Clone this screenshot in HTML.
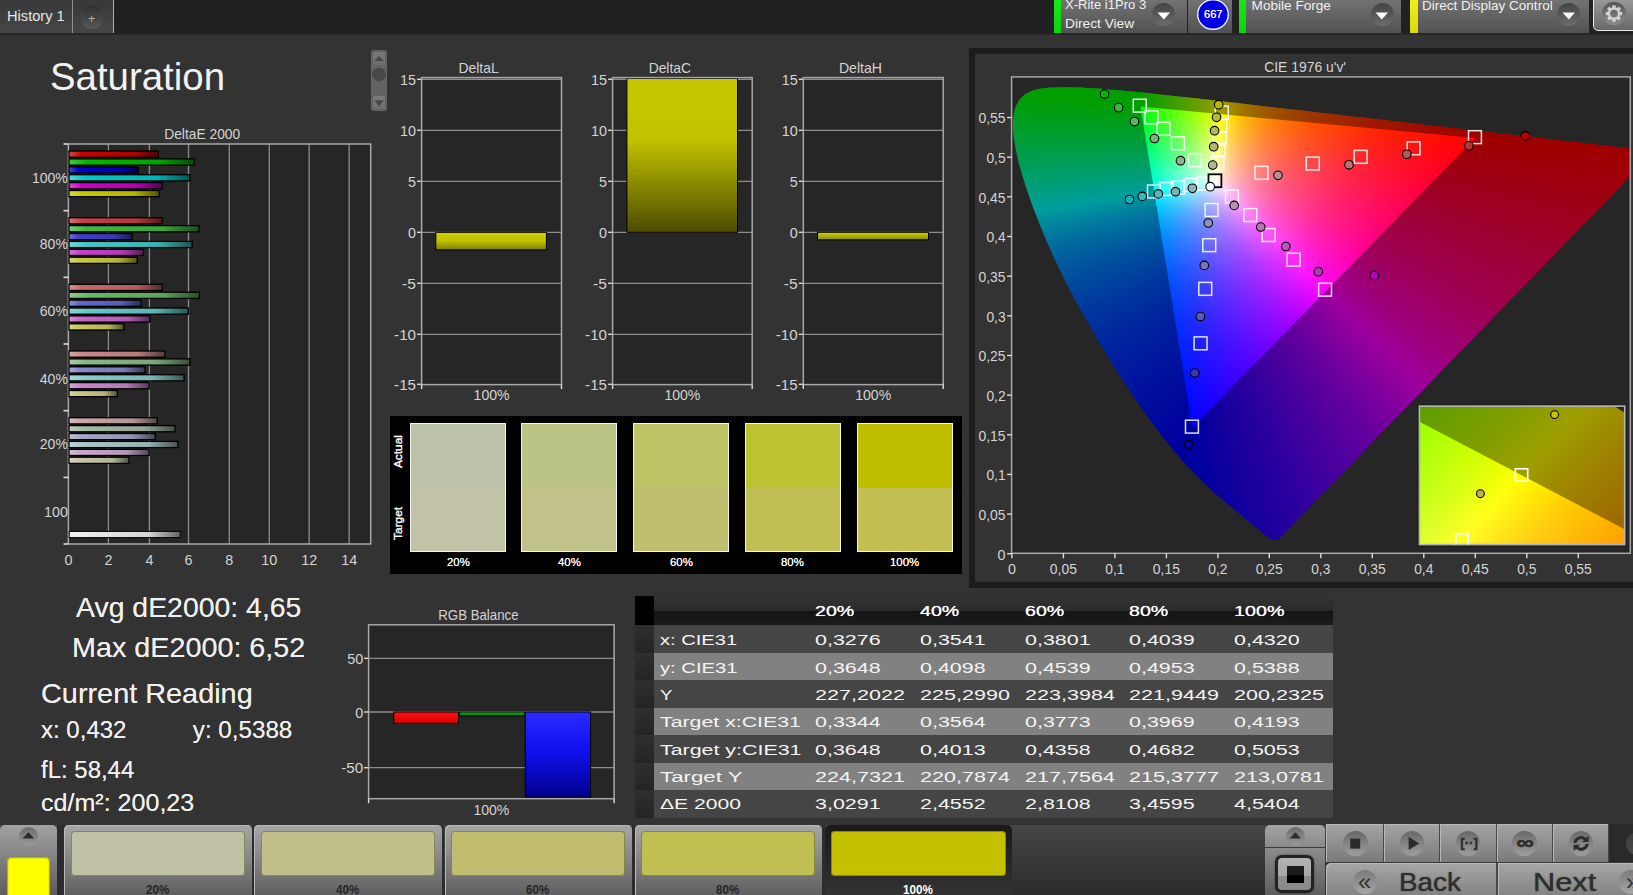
<!DOCTYPE html>
<html lang="en"><head><meta charset="utf-8"><title>Saturation</title>
<style>
html,body{margin:0;padding:0}
body{width:1633px;height:895px;overflow:hidden;background:#333;font-family:"Liberation Sans",sans-serif;position:relative}
.t{position:absolute;white-space:nowrap;line-height:1;transform-origin:0 0}
.a{position:absolute}
svg text{font-family:"Liberation Sans",sans-serif}
</style></head>
<body>
<div class="a" style="left:0.0px;top:0.0px;width:1633.0px;height:33.0px;background:#212121"></div>
<div class="a" style="left:0.0px;top:33.0px;width:1633.0px;height:2.2px;background:#262626"></div>
<div class="a" style="left:0.0px;top:0.0px;width:72.0px;height:32.8px;background:linear-gradient(#383838,#464646)"></div>
<div class="t" style="left:7.0px;top:9.2px;font-size:14.2px;color:#e6e6e6;transform:scaleX(1.0318);">History 1</div>
<div class="a" style="left:72.0px;top:0.0px;width:1.0px;height:32.8px;background:#909090"></div>
<div class="a" style="left:73.0px;top:0.0px;width:40.0px;height:32.8px;background:linear-gradient(#383838,#464646)"></div>
<div class="a" style="left:113.0px;top:0.0px;width:1.2px;height:32.8px;background:#b0b0b0"></div>
<div class="a" style="left:79.6px;top:5.1px;width:24.0px;height:24.0px;border-radius:50%;background:linear-gradient(#303030,#404040 45%,#585858)"></div>
<div class="t" style="left:87.9px;top:12.6px;font-size:12.5px;color:#b0b0b0;">+</div>
<div class="a" style="left:1053.7px;top:0.0px;width:133.3px;height:33.0px;background:linear-gradient(#727272,#525252)"></div><div class="a" style="left:1053.7px;top:0.0px;width:7.6px;height:33.0px;background:linear-gradient(#18e818,#0fd20f)"></div><div class="t" style="left:1065.1px;top:-2.0px;font-size:13.6px;color:#f0f0f0;transform:scaleX(0.9592);">X-Rite i1Pro 3</div><div class="t" style="left:1065.1px;top:17.3px;font-size:13.6px;color:#f0f0f0;transform:scaleX(1.0099);">Direct View</div><div class="a" style="left:1152.0px;top:3.0px;width:23.0px;height:23.0px;border-radius:50%;background:linear-gradient(#444,#6c6c6c)"></div><svg class="a" style="left:1156.7px;top:12px" width="14" height="9"><path d="M0.5,0.5H13L6.8,7.6Z" fill="#fff"/></svg>
<div class="a" style="left:1188.2px;top:0.0px;width:43.7px;height:33.0px;background:linear-gradient(#727272,#525252)"></div>
<div class="a" style="left:1197.2px;top:-1.2px;width:31.6px;height:31.6px;border-radius:50%;background:#0000e4;box-shadow:inset 0 0 0 1.4px #f4f4ff"></div>
<div class="t" style="left:1203.8px;top:9.1px;font-size:11.5px;color:#fff;transform:scaleX(0.9591);text-shadow:0 0 .5px #fff;">667</div>
<div class="a" style="left:1238.9px;top:0.0px;width:162.6px;height:33.0px;background:linear-gradient(#727272,#525252)"></div><div class="a" style="left:1238.9px;top:0.0px;width:7.6px;height:33.0px;background:linear-gradient(#18e818,#0fd20f)"></div><div class="t" style="left:1251.6px;top:-1.2px;font-size:13.6px;color:#f0f0f0;">Mobile Forge</div><div class="a" style="left:1370.5px;top:3.0px;width:23.0px;height:23.0px;border-radius:50%;background:linear-gradient(#444,#6c6c6c)"></div><svg class="a" style="left:1375.2px;top:12px" width="14" height="9"><path d="M0.5,0.5H13L6.8,7.6Z" fill="#fff"/></svg>
<div class="a" style="left:1410.4px;top:0.0px;width:178.2px;height:33.0px;background:linear-gradient(#727272,#525252)"></div><div class="a" style="left:1410.4px;top:0.0px;width:7.6px;height:33.0px;background:linear-gradient(#f0f018,#d8d810)"></div><div class="t" style="left:1421.8px;top:-1.2px;font-size:13.6px;color:#f0f0f0;transform:scaleX(0.9939);">Direct Display Control</div><div class="a" style="left:1557.2px;top:3.0px;width:23.0px;height:23.0px;border-radius:50%;background:linear-gradient(#444,#6c6c6c)"></div><svg class="a" style="left:1561.9px;top:12px" width="14" height="9"><path d="M0.5,0.5H13L6.8,7.6Z" fill="#fff"/></svg>
<div class="a" style="left:1592.6px;top:-3.0px;width:50.0px;height:34.0px;border:1.5px solid #e8e8e8;border-radius:0 0 0 5px;background:linear-gradient(#9a9a9a,#686868);box-sizing:border-box"></div>
<div class="a" style="left:1602.2px;top:1.8px;width:23.6px;height:23.6px;border-radius:50%;background:linear-gradient(#555,#8c8c8c)"></div>
<div class="t" style="left:50.2px;top:57.2px;font-size:39.0px;color:#f2f2f2;transform:scaleX(0.9844);">Saturation</div>
<div class="a" style="left:371.2px;top:50.2px;width:15.8px;height:60.6px;background:#636363;border-radius:3px"></div>
<div class="a" style="left:372.9px;top:52.0px;width:12.4px;height:12.6px;background:linear-gradient(#7a7a7a,#6e6e6e);border-radius:2.5px"></div>
<div class="a" style="left:372.9px;top:96.2px;width:12.4px;height:12.6px;background:linear-gradient(#7a7a7a,#6e6e6e);border-radius:2.5px"></div>
<div class="a" style="left:372.4px;top:67.7px;width:13.4px;height:13.4px;background:#484848;border-radius:50%"></div>
<div class="a" style="left:389.9px;top:416.0px;width:572.1px;height:158.0px;background:#000"></div>
<div class="a" style="left:410.1px;top:422.6px;width:96.0px;height:129.0px;box-sizing:border-box;border:1px solid #f4f4f4;background:linear-gradient(#bdc3a9 0,#bdc3a9 50.4%,#c1c2a6 50.4%,#c1c2a6 100%)"></div>
<div class="t" style="left:446.5px;top:556.2px;font-size:11.6px;color:#fff;transform:scaleX(0.9800);text-shadow:0 0 .5px #fff;">20%</div>
<div class="a" style="left:521.1px;top:422.6px;width:96.0px;height:129.0px;box-sizing:border-box;border:1px solid #f4f4f4;background:linear-gradient(#bbc484 0,#bbc484 50.4%,#c1c18a 50.4%,#c1c18a 100%)"></div>
<div class="t" style="left:557.5px;top:556.2px;font-size:11.6px;color:#fff;transform:scaleX(0.9800);text-shadow:0 0 .5px #fff;">40%</div>
<div class="a" style="left:633.2px;top:422.6px;width:96.0px;height:129.0px;box-sizing:border-box;border:1px solid #f4f4f4;background:linear-gradient(#bec465 0,#bec465 50.4%,#c0be6f 50.4%,#c0be6f 100%)"></div>
<div class="t" style="left:669.6px;top:556.2px;font-size:11.6px;color:#fff;transform:scaleX(0.9800);text-shadow:0 0 .5px #fff;">60%</div>
<div class="a" style="left:744.9px;top:422.6px;width:96.0px;height:129.0px;box-sizing:border-box;border:1px solid #f4f4f4;background:linear-gradient(#bdc232 0,#bdc232 50.4%,#c0bd52 50.4%,#c0bd52 100%)"></div>
<div class="t" style="left:781.3px;top:556.2px;font-size:11.6px;color:#fff;transform:scaleX(0.9800);text-shadow:0 0 .5px #fff;">80%</div>
<div class="a" style="left:856.9px;top:422.6px;width:96.0px;height:129.0px;box-sizing:border-box;border:1px solid #f4f4f4;background:linear-gradient(#bfbf00 0,#bfbf00 50.4%,#c3bf52 50.4%,#c3bf52 100%)"></div>
<div class="t" style="left:890.1px;top:556.2px;font-size:11.6px;color:#fff;transform:scaleX(0.9849);text-shadow:0 0 .5px #fff;">100%</div>
<div class="a" style="left:969.4px;top:47.8px;width:680.0px;height:540.5px;box-sizing:border-box;border:6.3px solid #1c1c1c;background:#333"></div>
<div class="a" style="left:1011.6px;top:76.9px;width:618.7px;height:476.4px;background:#262626;overflow:hidden"><div class="a" style="left:0;top:0;width:618.7px;height:476.4px;background:conic-gradient(from 0deg at 180.35px 350.49px,#97ffff 0.00deg,#edffff 4.50deg,#f8ffff 5.00deg,#fffcff 5.50deg,#ffe8ff 6.50deg,#ffc7ff 8.50deg,#ffb9ff 9.50deg,#ffa1ff 11.50deg,#ff88ff 14.00deg,#ff70ff 17.00deg,#ff56ff 21.00deg,#ff29ff 31.00deg,#ff22ff 33.00deg,#ff00ff 44.50deg,#ff00ff 170.81deg,#0000ff 170.82deg,#0000ff 224.34deg,#00ffff 224.35deg,#00ffff 350.83deg,#3cffff 354.50deg,#43ffff 355.00deg,#6cffff 357.50deg,#97ffff 360.00deg),conic-gradient(from 0deg at 128.50px 29.64px,#ffff00 0.00deg,#ffff00 95.37deg,#ffff04 96.00deg,#ffff87 120.50deg,#ffffc6 129.00deg,#fffff5 134.00deg,#fffffb 134.50deg,#feffff 135.00deg,#f4ffff 136.00deg,#e9ffff 137.00deg,#9fffff 145.50deg,#55ffff 156.50deg,#3cffff 160.50deg,#22ffff 165.00deg,#00ffff 170.83deg,#00ffff 275.36deg,#00ff00 275.37deg,#00ff00 350.82deg,#ffff00 350.83deg,#ffff00 360.00deg),conic-gradient(from 0deg at 463.32px 61.05px,#ffff00 0.00deg,#ffff00 44.34deg,#ff0000 44.35deg,#ff0000 95.35deg,#ff00ff 95.36deg,#ff00ff 224.36deg,#ff16ff 231.00deg,#ff1fff 233.50deg,#ff32ff 238.50deg,#ff3bff 240.50deg,#ff59ff 246.00deg,#ff82ff 251.50deg,#ff9bff 254.00deg,#ffb3ff 256.00deg,#ffc8ff 257.50deg,#ffd8ff 258.50deg,#ffeaff 259.50deg,#fffeff 260.50deg,#ffffc3 263.50deg,#ffff84 267.00deg,#ffff74 268.00deg,#ffff4b 270.50deg,#ffff00 275.37deg,#ffff00 360.00deg);background-blend-mode:darken;clip-path:polygon(265.5px 463.7px,264.0px 462.6px,264.0px 462.6px,263.9px 462.6px,263.9px 462.6px,263.9px 462.6px,263.8px 462.6px,263.8px 462.7px,263.7px 462.7px,263.7px 462.8px,263.6px 462.8px,263.5px 462.7px,263.4px 462.7px,263.3px 462.7px,263.2px 462.7px,263.2px 462.7px,263.1px 462.8px,263.1px 462.9px,263.0px 463.0px,263.0px 463.0px,262.9px 463.1px,262.9px 463.1px,262.8px 463.1px,262.7px 463.1px,262.5px 463.1px,262.4px 463.1px,262.3px 463.1px,262.1px 463.1px,261.9px 463.1px,261.8px 463.1px,261.6px 463.1px,261.5px 463.1px,261.3px 463.1px,261.1px 463.1px,260.9px 463.0px,260.7px 463.0px,260.5px 462.9px,260.3px 462.8px,260.0px 462.7px,259.7px 462.5px,259.3px 462.3px,258.8px 462.0px,258.3px 461.7px,257.8px 461.4px,257.2px 461.0px,256.6px 460.6px,256.0px 460.1px,255.3px 459.6px,254.6px 459.0px,253.8px 458.4px,253.0px 457.8px,252.1px 457.0px,251.1px 456.3px,250.1px 455.5px,249.0px 454.6px,247.9px 453.6px,246.7px 452.6px,245.4px 451.6px,244.1px 450.4px,242.8px 449.3px,241.3px 448.0px,239.8px 446.8px,238.3px 445.5px,236.6px 444.1px,234.8px 442.6px,233.0px 441.1px,231.0px 439.5px,229.0px 437.7px,226.8px 435.9px,224.5px 434.1px,222.2px 432.1px,219.7px 430.1px,217.2px 428.0px,214.6px 425.8px,211.8px 423.5px,209.0px 421.1px,206.0px 418.5px,202.9px 415.8px,199.7px 412.9px,196.3px 409.8px,192.9px 406.6px,189.4px 403.2px,185.7px 399.7px,181.9px 395.8px,178.0px 391.6px,173.7px 387.0px,169.2px 381.8px,164.3px 376.1px,159.1px 369.9px,153.7px 363.1px,148.1px 356.0px,142.4px 348.4px,136.5px 340.3px,130.4px 331.9px,124.2px 323.0px,117.9px 313.6px,111.4px 303.7px,104.9px 293.5px,98.3px 282.9px,91.7px 272.0px,85.1px 260.9px,78.6px 249.7px,72.1px 238.4px,65.7px 226.9px,59.5px 215.4px,53.6px 203.9px,48.0px 192.6px,42.8px 181.4px,37.8px 170.4px,33.2px 159.7px,28.9px 149.3px,24.9px 139.2px,21.2px 129.5px,17.9px 120.2px,14.9px 111.4px,12.2px 103.1px,9.9px 95.3px,7.8px 88.0px,6.1px 81.2px,4.7px 74.8px,3.6px 68.8px,2.7px 63.3px,2.0px 58.2px,1.6px 53.4px,1.4px 49.0px,1.5px 45.0px,1.7px 41.2px,2.2px 37.6px,2.8px 34.4px,3.7px 31.3px,4.8px 28.6px,6.0px 26.0px,7.4px 23.7px,9.0px 21.6px,10.7px 19.8px,12.6px 18.2px,14.6px 16.7px,16.8px 15.5px,19.0px 14.5px,21.3px 13.6px,23.8px 12.9px,26.3px 12.3px,28.8px 11.8px,31.5px 11.4px,34.2px 11.1px,37.0px 10.9px,39.8px 10.7px,42.7px 10.6px,45.6px 10.5px,48.5px 10.4px,51.5px 10.4px,54.4px 10.4px,57.3px 10.4px,60.2px 10.4px,63.2px 10.5px,66.1px 10.6px,69.1px 10.7px,72.1px 10.8px,75.2px 11.0px,78.3px 11.1px,81.4px 11.3px,84.6px 11.5px,87.9px 11.7px,91.2px 12.0px,94.5px 12.2px,97.9px 12.5px,101.4px 12.8px,104.9px 13.1px,108.5px 13.4px,112.1px 13.8px,115.9px 14.1px,119.7px 14.5px,123.5px 14.9px,127.5px 15.3px,131.5px 15.7px,135.6px 16.1px,139.8px 16.6px,144.0px 17.0px,148.4px 17.5px,152.9px 18.0px,157.4px 18.5px,162.0px 19.0px,166.8px 19.5px,171.6px 20.0px,176.5px 20.6px,181.5px 21.2px,186.7px 21.7px,191.9px 22.3px,197.3px 22.9px,202.7px 23.6px,208.2px 24.2px,213.9px 24.8px,219.7px 25.5px,225.5px 26.2px,231.5px 26.9px,237.6px 27.6px,243.8px 28.3px,250.1px 29.0px,256.6px 29.8px,263.1px 30.5px,269.7px 31.3px,276.4px 32.0px,283.2px 32.8px,290.1px 33.6px,297.1px 34.4px,304.2px 35.3px,311.4px 36.1px,318.6px 36.9px,325.9px 37.7px,333.3px 38.6px,340.8px 39.5px,348.3px 40.3px,355.8px 41.2px,363.4px 42.1px,370.9px 42.9px,378.4px 43.8px,385.8px 44.7px,393.1px 45.5px,400.4px 46.3px,407.6px 47.2px,414.8px 48.0px,422.0px 48.8px,429.2px 49.7px,436.3px 50.5px,443.4px 51.3px,450.2px 52.1px,456.9px 52.9px,463.5px 53.6px,469.9px 54.3px,476.1px 55.1px,482.3px 55.8px,488.2px 56.4px,494.1px 57.1px,499.7px 57.8px,505.3px 58.4px,510.6px 59.0px,515.8px 59.6px,520.8px 60.2px,525.6px 60.8px,530.3px 61.3px,534.8px 61.8px,539.1px 62.3px,543.3px 62.8px,547.4px 63.3px,551.3px 63.7px,555.0px 64.1px,558.7px 64.6px,562.2px 65.0px,565.6px 65.4px,568.9px 65.7px,572.1px 66.1px,575.2px 66.5px,578.3px 66.8px,581.2px 67.2px,584.1px 67.5px,586.9px 67.8px,589.5px 68.1px,592.1px 68.4px,594.6px 68.7px,597.0px 69.0px,599.3px 69.3px,601.6px 69.5px,603.7px 69.8px,605.8px 70.0px,607.7px 70.2px,609.6px 70.4px,611.3px 70.6px,612.9px 70.8px,614.5px 71.0px,615.9px 71.2px,617.3px 71.3px,618.6px 71.5px,619.9px 71.6px,621.1px 71.8px,622.3px 71.9px,623.3px 72.0px,624.4px 72.1px,625.3px 72.3px,626.3px 72.4px,627.1px 72.5px,627.9px 72.6px,628.6px 72.6px,629.3px 72.7px,629.9px 72.8px,630.4px 72.8px,630.9px 72.9px,631.5px 73.0px,632.0px 73.0px,632.5px 73.1px,632.9px 73.1px,633.4px 73.2px,633.8px 73.2px,634.2px 73.3px,634.6px 73.3px,635.0px 73.4px,635.4px 73.4px,635.8px 73.5px,636.2px 73.5px,636.5px 73.6px,636.9px 73.6px,637.3px 73.6px,637.7px 73.7px,638.0px 73.7px,638.4px 73.8px,638.7px 73.8px,639.0px 73.8px,639.3px 73.9px,639.5px 73.9px,639.7px 73.9px,639.9px 73.9px,640.0px 74.0px,640.1px 74.0px,640.2px 74.0px,640.4px 74.0px,640.5px 74.0px,640.5px 74.0px,640.6px 74.0px,640.7px 74.0px,640.8px 74.0px,640.8px 74.0px,643.3px 74.0px)"><svg class="a" style="left:0;top:0" width="618.7" height="476.4"><path d="M0,0H618.7V476.4H0Z M463.3,61.1 128.5,29.6 180.4,350.5Z" fill="#000" fill-opacity="0.38" fill-rule="evenodd"/></svg></div></div>
<div class="a" style="left:1417.4px;top:404.1px;width:209.3px;height:142.5px;background:#1e1e1e"></div>
<div class="a" style="left:1419.4px;top:406.1px;width:205.3px;height:138.5px;background:#262626;overflow:hidden"><div class="a" style="left:0;top:0;width:205.3px;height:138.5px;background:conic-gradient(from 0deg at -613.16px 849.07px,#00ffff 0.00deg,#00ffff 22.85deg,#05ffff 23.25deg,#7cffff 34.25deg,#d5ffff 40.25deg,#ffffff 42.50deg,#ffcfff 45.25deg,#ff8eff 50.25deg,#ff49ff 58.00deg,#ff40ff 59.25deg,#ff31ff 61.50deg,#ff00ff 70.04deg,#ff00ff 202.83deg,#0000ff 202.84deg,#0000ff 250.02deg,#00ffff 250.03deg,#00ffff 360.00deg),conic-gradient(from 0deg at -214.76px -97.01px,#00ff00 0.00deg,#00ff00 22.84deg,#ffff00 22.85deg,#ffff00 117.75deg,#ffff04 118.75deg,#ffff09 120.50deg,#ffff0e 122.25deg,#ffff14 124.50deg,#ffff17 125.50deg,#ffff1d 127.75deg,#ffff22 129.50deg,#ffff28 131.75deg,#ffff2b 132.75deg,#ffff30 134.50deg,#ffff35 136.25deg,#ffff38 137.25deg,#ffff3b 138.25deg,#ffff3e 139.25deg,#ffff45 141.50deg,#ffff49 142.75deg,#ffff4d 144.00deg,#ffff52 145.50deg,#ffff58 147.25deg,#ffff61 149.75deg,#ffff78 155.75deg,#ffff81 157.75deg,#ffff88 159.25deg,#ffff91 161.00deg,#ffffd9 172.00deg,#ffffe4 173.25deg,#fffffd 175.75deg,#feffff 176.00deg,#59ffff 193.25deg,#4effff 194.50deg,#3cffff 196.50deg,#33ffff 197.50deg,#2affff 198.50deg,#21ffff 199.50deg,#00ffff 202.85deg,#00ffff 297.65deg,#00ff00 297.66deg,#00ff00 360.00deg),conic-gradient(from 0deg at 688.28px 376.03px,#ffff00 0.00deg,#ffff00 70.02deg,#ff0000 70.03deg,#ff0000 117.64deg,#ff00ff 117.65deg,#ff00ff 250.04deg,#ff03ff 250.25deg,#ff64ff 259.50deg,#ff6cff 260.25deg,#ff82ff 262.00deg,#ffcbff 267.00deg,#fffcff 269.75deg,#fffffd 270.00deg,#fffff3 270.50deg,#ffffc6 273.25deg,#ffff93 277.25deg,#ffff4b 285.25deg,#ffff42 286.50deg,#ffff33 288.75deg,#ffff00 297.75deg,#ffff00 360.00deg);background-blend-mode:darken;clip-path:polygon(-549.1px 945.5px,-549.2px 945.5px,-549.2px 945.5px,-549.3px 945.5px,-549.3px 945.5px,-549.4px 945.5px,-549.5px 945.5px,-549.6px 945.5px,-549.7px 945.6px,-549.8px 945.6px,-549.9px 945.6px,-550.1px 945.6px,-550.2px 945.5px,-550.3px 945.5px,-550.5px 945.5px,-550.6px 945.6px,-550.7px 945.6px,-550.8px 945.7px,-550.9px 945.7px,-551.1px 945.8px,-551.2px 945.8px,-551.3px 945.8px,-551.4px 945.8px,-551.6px 945.8px,-551.8px 945.8px,-552.0px 945.8px,-552.2px 945.8px,-552.5px 945.8px,-552.7px 945.8px,-553.0px 945.8px,-553.2px 945.8px,-553.4px 945.8px,-553.7px 945.8px,-553.9px 945.8px,-554.2px 945.7px,-554.5px 945.7px,-554.8px 945.7px,-555.1px 945.6px,-555.4px 945.5px,-555.8px 945.4px,-556.3px 945.2px,-556.8px 945.1px,-557.4px 944.8px,-558.0px 944.6px,-558.6px 944.3px,-559.2px 944.0px,-559.9px 943.7px,-560.6px 943.4px,-561.4px 943.0px,-562.2px 942.6px,-563.0px 942.1px,-564.0px 941.6px,-565.0px 941.1px,-566.0px 940.5px,-567.1px 939.9px,-568.3px 939.2px,-569.5px 938.5px,-570.7px 937.7px,-572.0px 936.9px,-573.4px 936.1px,-574.9px 935.2px,-576.4px 934.2px,-578.1px 933.3px,-579.8px 932.3px,-581.7px 931.2px,-583.7px 930.0px,-585.8px 928.8px,-588.0px 927.5px,-590.4px 926.1px,-592.9px 924.7px,-595.5px 923.2px,-598.3px 921.6px,-601.1px 919.9px,-604.1px 918.2px,-607.3px 916.3px,-610.5px 914.3px,-614.0px 912.2px,-617.6px 910.0px,-621.3px 907.5px,-625.2px 904.9px,-629.2px 902.1px,-633.3px 899.2px,-637.6px 896.0px,-642.1px 892.5px,-646.7px 888.7px,-651.7px 884.3px,-657.0px 879.4px,-662.6px 873.8px,-668.7px 867.5px,-675.1px 860.6px,-681.9px 852.9px,-688.9px 844.5px,-696.3px 835.3px,-704.0px 825.3px,-712.0px 814.2px,-720.5px 802.0px,-729.3px 788.6px,-738.6px 774.0px,-748.3px 757.9px,-758.4px 740.5px,-769.1px 721.7px,-780.3px 701.3px,-792.0px 679.4px,-804.1px 655.6px,-816.5px 630.0px,-829.1px 602.5px,-841.6px 573.2px,-854.0px 542.0px,-866.4px 509.0px,-878.7px 474.1px,-891.0px 437.4px,-903.3px 398.8px,-915.4px 358.7px,-927.2px 317.2px,-938.5px 274.5px,-949.3px 231.1px,-959.2px 187.2px,-968.4px 143.1px,-976.5px 98.8px,-983.7px 54.7px,-989.9px 10.9px,-994.9px -32.3px,-998.6px -74.4px,-1001.0px -115.3px,-1001.9px -154.9px,-1001.3px -193.1px,-999.2px -230.0px,-995.6px -265.4px,-990.3px -299.1px,-983.4px -330.8px,-974.7px -360.1px,-964.4px -387.2px,-952.5px -411.7px,-939.1px -433.6px,-924.4px -452.5px,-908.4px -468.5px,-891.2px -481.4px,-873.0px -491.5px,-854.0px -499.0px,-834.4px -504.0px,-814.2px -506.6px,-793.6px -507.1px,-772.7px -505.7px,-751.4px -502.8px,-730.0px -498.5px,-708.3px -493.3px,-686.6px -487.3px,-664.8px -480.6px,-643.2px -473.3px,-621.7px -465.6px,-600.6px -457.7px,-579.9px -449.6px,-559.4px -441.3px,-539.2px -432.8px,-519.2px -424.2px,-499.3px -415.2px,-479.5px -406.1px,-459.9px -396.7px,-440.4px -387.1px,-421.0px -377.4px,-401.7px -367.4px,-382.4px -357.2px,-363.1px -346.9px,-343.9px -336.3px,-324.8px -325.7px,-305.7px -314.8px,-286.6px -303.9px,-267.5px -292.8px,-248.5px -281.5px,-229.5px -270.2px,-210.5px -258.7px,-191.5px -247.2px,-172.5px -235.5px,-153.5px -223.8px,-134.5px -212.0px,-115.5px -200.1px,-96.5px -188.2px,-77.5px -176.2px,-58.6px -164.1px,-39.6px -152.0px,-20.6px -139.9px,-1.6px -127.7px,17.3px -115.5px,36.2px -103.3px,55.2px -91.0px,74.0px -78.8px,92.9px -66.6px,111.7px -54.3px,130.5px -42.1px,149.2px -29.9px,167.9px -17.7px,186.5px -5.5px,205.0px 6.6px,223.4px 18.7px,241.8px 30.8px,260.1px 42.8px,278.2px 54.7px,296.3px 66.6px,314.2px 78.4px,332.0px 90.1px,349.6px 101.7px,367.1px 113.2px,384.4px 124.6px,401.6px 135.8px,418.6px 147.0px,435.4px 158.0px,452.0px 168.9px,468.3px 179.6px,484.5px 190.2px,500.4px 200.6px,516.0px 210.9px,531.4px 221.1px,546.6px 231.0px,561.4px 240.8px,575.8px 250.3px,589.8px 259.5px,603.4px 268.4px,616.5px 277.1px,629.3px 285.4px,641.7px 293.6px,653.8px 301.6px,665.8px 309.4px,677.4px 317.0px,688.7px 324.5px,699.6px 331.6px,710.1px 338.5px,720.2px 345.1px,729.9px 351.5px,739.2px 357.5px,748.1px 363.4px,756.7px 369.0px,765.0px 374.4px,772.9px 379.6px,780.5px 384.6px,787.8px 389.4px,794.7px 394.0px,801.4px 398.4px,807.7px 402.5px,813.8px 406.5px,819.6px 410.3px,825.1px 414.0px,830.3px 417.4px,835.4px 420.7px,840.2px 423.9px,844.8px 426.9px,849.2px 429.8px,853.5px 432.6px,857.5px 435.2px,861.4px 437.7px,865.1px 440.2px,868.7px 442.6px,872.2px 444.8px,875.5px 447.1px,878.8px 449.2px,881.9px 451.3px,884.9px 453.2px,887.8px 455.1px,890.6px 457.0px,893.2px 458.7px,895.8px 460.4px,898.2px 462.0px,900.5px 463.5px,902.8px 465.0px,904.9px 466.4px,906.9px 467.7px,908.8px 469.0px,910.6px 470.1px,912.3px 471.2px,913.8px 472.2px,915.3px 473.2px,916.7px 474.1px,918.0px 475.0px,919.3px 475.8px,920.5px 476.6px,921.6px 477.4px,922.7px 478.1px,923.8px 478.8px,924.7px 479.4px,925.6px 480.0px,926.5px 480.6px,927.2px 481.1px,927.9px 481.6px,928.6px 482.0px,929.2px 482.4px,929.7px 482.7px,930.2px 483.1px,930.7px 483.4px,931.2px 483.7px,931.7px 484.0px,932.2px 484.3px,932.6px 484.6px,933.0px 484.9px,933.4px 485.2px,933.8px 485.4px,934.2px 485.7px,934.5px 485.9px,934.9px 486.2px,935.3px 486.4px,935.7px 486.6px,936.0px 486.9px,936.4px 487.1px,936.7px 487.4px,937.1px 487.6px,937.4px 487.8px,937.8px 488.0px,938.1px 488.2px,938.3px 488.4px,938.5px 488.5px,938.7px 488.7px,938.8px 488.8px,939.0px 488.8px,939.1px 488.9px,939.2px 489.0px,939.3px 489.1px,939.4px 489.1px,939.5px 489.2px,939.6px 489.2px,939.7px 489.3px,939.7px 489.3px,939.8px 489.4px,939.8px 489.4px)"><svg class="a" style="left:0;top:0" width="205.3" height="138.5"><path d="M-9,-9H214.3V147.5H-9Z M688.3,376.0 -214.8,-97.0 -613.2,849.1Z" fill="#000" fill-opacity="0.38" fill-rule="evenodd"/></svg></div></div>
<div class="t" style="left:75.6px;top:594.3px;font-size:28.0px;color:#f0f0f0;transform:scaleX(1.0149);text-shadow:0 0 .5px rgba(240,240,240,.8);">Avg dE2000: 4,65</div>
<div class="t" style="left:72.0px;top:633.9px;font-size:28.0px;color:#f0f0f0;transform:scaleX(1.0266);text-shadow:0 0 .5px rgba(240,240,240,.8);">Max dE2000: 6,52</div>
<div class="t" style="left:41.1px;top:679.7px;font-size:28.0px;color:#f0f0f0;transform:scaleX(1.0305);text-shadow:0 0 .5px rgba(240,240,240,.8);">Current Reading</div>
<div class="t" style="left:41.1px;top:717.8px;font-size:24.2px;color:#f0f0f0;transform:scaleX(0.9930);text-shadow:0 0 .5px rgba(240,240,240,.8);">x: 0,432</div>
<div class="t" style="left:192.8px;top:717.8px;font-size:24.2px;color:#f0f0f0;text-shadow:0 0 .5px rgba(240,240,240,.8);">y: 0,5388</div>
<div class="t" style="left:41.1px;top:757.5px;font-size:24.2px;color:#f0f0f0;transform:scaleX(0.9907);text-shadow:0 0 .5px rgba(240,240,240,.8);">fL: 58,44</div>
<div class="t" style="left:41.1px;top:791.0px;font-size:24.2px;color:#f0f0f0;transform:scaleX(1.0361);text-shadow:0 0 .5px rgba(240,240,240,.8);">cd/m²: 200,23</div>
<div class="a" style="left:634.8px;top:596.0px;width:19.0px;height:28.8px;background:#000"></div>
<div class="a" style="left:653.8px;top:596.0px;width:679.2px;height:28.8px;background:linear-gradient(#333 0,#2a2a2a 52%,#131313 52%,#1c1c1c 100%)"></div>
<div class="t" style="left:815.3px;top:602.7px;font-size:15.4px;color:#fff;transform:scaleX(1.2768);text-shadow:0 0 .6px #fff;">20%</div>
<div class="t" style="left:919.9px;top:602.7px;font-size:15.4px;color:#fff;transform:scaleX(1.2768);text-shadow:0 0 .6px #fff;">40%</div>
<div class="t" style="left:1024.5px;top:602.7px;font-size:15.4px;color:#fff;transform:scaleX(1.2768);text-shadow:0 0 .6px #fff;">60%</div>
<div class="t" style="left:1129.2px;top:602.7px;font-size:15.4px;color:#fff;transform:scaleX(1.2768);text-shadow:0 0 .6px #fff;">80%</div>
<div class="t" style="left:1234.0px;top:602.7px;font-size:15.4px;color:#fff;transform:scaleX(1.2832);text-shadow:0 0 .6px #fff;">100%</div>
<div class="a" style="left:634.8px;top:624.8px;width:19.0px;height:27.8px;background:linear-gradient(#2f2f2f,#242424)"></div>
<div class="a" style="left:653.8px;top:624.8px;width:679.2px;height:27.8px;background:#454545"></div>
<div class="t" style="left:660.4px;top:632.4px;font-size:15.4px;color:#f4f4f4;transform:scaleX(1.3061);">x: CIE31</div>
<div class="t" style="left:815.3px;top:632.4px;font-size:15.4px;color:#f4f4f4;transform:scaleX(1.3949);">0,3276</div>
<div class="t" style="left:919.9px;top:632.4px;font-size:15.4px;color:#f4f4f4;transform:scaleX(1.3949);">0,3541</div>
<div class="t" style="left:1024.5px;top:632.4px;font-size:15.4px;color:#f4f4f4;transform:scaleX(1.3949);">0,3801</div>
<div class="t" style="left:1129.2px;top:632.4px;font-size:15.4px;color:#f4f4f4;transform:scaleX(1.3949);">0,4039</div>
<div class="t" style="left:1234.0px;top:632.4px;font-size:15.4px;color:#f4f4f4;transform:scaleX(1.3949);">0,4320</div>
<div class="a" style="left:634.8px;top:652.6px;width:19.0px;height:27.2px;background:linear-gradient(#2f2f2f,#242424)"></div>
<div class="a" style="left:653.8px;top:652.6px;width:679.2px;height:27.2px;background:#818181"></div>
<div class="t" style="left:660.4px;top:659.7px;font-size:15.4px;color:#f4f4f4;transform:scaleX(1.3149);">y: CIE31</div>
<div class="t" style="left:815.3px;top:659.7px;font-size:15.4px;color:#f4f4f4;transform:scaleX(1.3949);">0,3648</div>
<div class="t" style="left:919.9px;top:659.7px;font-size:15.4px;color:#f4f4f4;transform:scaleX(1.3949);">0,4098</div>
<div class="t" style="left:1024.5px;top:659.7px;font-size:15.4px;color:#f4f4f4;transform:scaleX(1.3949);">0,4539</div>
<div class="t" style="left:1129.2px;top:659.7px;font-size:15.4px;color:#f4f4f4;transform:scaleX(1.3949);">0,4953</div>
<div class="t" style="left:1234.0px;top:659.7px;font-size:15.4px;color:#f4f4f4;transform:scaleX(1.3949);">0,5388</div>
<div class="a" style="left:634.8px;top:679.8px;width:19.0px;height:28.1px;background:linear-gradient(#2f2f2f,#242424)"></div>
<div class="a" style="left:653.8px;top:679.8px;width:679.2px;height:28.1px;background:#454545"></div>
<div class="t" style="left:660.4px;top:687.0px;font-size:15.4px;color:#f4f4f4;transform:scaleX(1.2145);">Y</div>
<div class="t" style="left:815.3px;top:687.0px;font-size:15.4px;color:#f4f4f4;transform:scaleX(1.4015);">227,2022</div>
<div class="t" style="left:919.9px;top:687.0px;font-size:15.4px;color:#f4f4f4;transform:scaleX(1.4015);">225,2990</div>
<div class="t" style="left:1024.5px;top:687.0px;font-size:15.4px;color:#f4f4f4;transform:scaleX(1.4015);">223,3984</div>
<div class="t" style="left:1129.2px;top:687.0px;font-size:15.4px;color:#f4f4f4;transform:scaleX(1.4015);">221,9449</div>
<div class="t" style="left:1234.0px;top:687.0px;font-size:15.4px;color:#f4f4f4;transform:scaleX(1.4015);">200,2325</div>
<div class="a" style="left:634.8px;top:707.9px;width:19.0px;height:27.3px;background:linear-gradient(#2f2f2f,#242424)"></div>
<div class="a" style="left:653.8px;top:707.9px;width:679.2px;height:27.3px;background:#818181"></div>
<div class="t" style="left:660.4px;top:714.3px;font-size:15.4px;color:#f4f4f4;transform:scaleX(1.3843);">Target x:CIE31</div>
<div class="t" style="left:815.3px;top:714.3px;font-size:15.4px;color:#f4f4f4;transform:scaleX(1.3949);">0,3344</div>
<div class="t" style="left:919.9px;top:714.3px;font-size:15.4px;color:#f4f4f4;transform:scaleX(1.3949);">0,3564</div>
<div class="t" style="left:1024.5px;top:714.3px;font-size:15.4px;color:#f4f4f4;transform:scaleX(1.3949);">0,3773</div>
<div class="t" style="left:1129.2px;top:714.3px;font-size:15.4px;color:#f4f4f4;transform:scaleX(1.3949);">0,3969</div>
<div class="t" style="left:1234.0px;top:714.3px;font-size:15.4px;color:#f4f4f4;transform:scaleX(1.3949);">0,4193</div>
<div class="a" style="left:634.8px;top:735.2px;width:19.0px;height:27.5px;background:linear-gradient(#2f2f2f,#242424)"></div>
<div class="a" style="left:653.8px;top:735.2px;width:679.2px;height:27.5px;background:#454545"></div>
<div class="t" style="left:660.4px;top:741.6px;font-size:15.4px;color:#f4f4f4;transform:scaleX(1.3894);">Target y:CIE31</div>
<div class="t" style="left:815.3px;top:741.6px;font-size:15.4px;color:#f4f4f4;transform:scaleX(1.3949);">0,3648</div>
<div class="t" style="left:919.9px;top:741.6px;font-size:15.4px;color:#f4f4f4;transform:scaleX(1.3949);">0,4013</div>
<div class="t" style="left:1024.5px;top:741.6px;font-size:15.4px;color:#f4f4f4;transform:scaleX(1.3949);">0,4358</div>
<div class="t" style="left:1129.2px;top:741.6px;font-size:15.4px;color:#f4f4f4;transform:scaleX(1.3949);">0,4682</div>
<div class="t" style="left:1234.0px;top:741.6px;font-size:15.4px;color:#f4f4f4;transform:scaleX(1.3949);">0,5053</div>
<div class="a" style="left:634.8px;top:762.7px;width:19.0px;height:27.4px;background:linear-gradient(#2f2f2f,#242424)"></div>
<div class="a" style="left:653.8px;top:762.7px;width:679.2px;height:27.4px;background:#818181"></div>
<div class="t" style="left:660.4px;top:769.0px;font-size:15.4px;color:#f4f4f4;transform:scaleX(1.4460);">Target Y</div>
<div class="t" style="left:815.3px;top:769.0px;font-size:15.4px;color:#f4f4f4;transform:scaleX(1.4015);">224,7321</div>
<div class="t" style="left:919.9px;top:769.0px;font-size:15.4px;color:#f4f4f4;transform:scaleX(1.4015);">220,7874</div>
<div class="t" style="left:1024.5px;top:769.0px;font-size:15.4px;color:#f4f4f4;transform:scaleX(1.4015);">217,7564</div>
<div class="t" style="left:1129.2px;top:769.0px;font-size:15.4px;color:#f4f4f4;transform:scaleX(1.4015);">215,3777</div>
<div class="t" style="left:1234.0px;top:769.0px;font-size:15.4px;color:#f4f4f4;transform:scaleX(1.4015);">213,0781</div>
<div class="a" style="left:634.8px;top:790.1px;width:19.0px;height:27.7px;background:linear-gradient(#2f2f2f,#242424)"></div>
<div class="a" style="left:653.8px;top:790.1px;width:679.2px;height:27.7px;background:#454545"></div>
<div class="t" style="left:660.4px;top:796.3px;font-size:15.4px;color:#f4f4f4;transform:scaleX(1.3721);">ΔE 2000</div>
<div class="t" style="left:815.3px;top:796.3px;font-size:15.4px;color:#f4f4f4;transform:scaleX(1.3949);">3,0291</div>
<div class="t" style="left:919.9px;top:796.3px;font-size:15.4px;color:#f4f4f4;transform:scaleX(1.3949);">2,4552</div>
<div class="t" style="left:1024.5px;top:796.3px;font-size:15.4px;color:#f4f4f4;transform:scaleX(1.3949);">2,8108</div>
<div class="t" style="left:1129.2px;top:796.3px;font-size:15.4px;color:#f4f4f4;transform:scaleX(1.3949);">3,4595</div>
<div class="t" style="left:1234.0px;top:796.3px;font-size:15.4px;color:#f4f4f4;transform:scaleX(1.3949);">4,5404</div>
<div class="a" style="left:0.0px;top:824.6px;width:1633.0px;height:70.4px;background:linear-gradient(#464646,#2c2c2c)"></div>
<div class="a" style="left:0.0px;top:824.6px;width:56.5px;height:75.4px;background:linear-gradient(#a2a2a2,#585858);border-radius:5px 5px 0 0"></div>
<div class="a" style="left:56.5px;top:824.6px;width:8.0px;height:70.4px;background:#2c2c2c"></div>
<div class="a" style="left:18.9px;top:826.8px;width:19.0px;height:19.0px;border-radius:50%;background:linear-gradient(#6c6c6c,#9a9a9a)"></div>
<div class="a" style="left:6.5px;top:857.2px;width:43.7px;height:45.0px;background:#ffff00;border-radius:5px;box-shadow:inset 0 0 0 1.2px #b4b400"></div>
<div class="a" style="left:64.3px;top:824.6px;width:187.3px;height:75.4px;background:linear-gradient(#a6a6a6 0,#8e8e8e 35%,#5a5a5a 100%);border-radius:5px 5px 0 0;box-shadow:inset 1px 1px 0 #b8b8b8"></div>
<div class="a" style="left:251.6px;top:824.6px;width:2.8px;height:70.4px;background:#2c2c2c"></div>
<div class="a" style="left:70.6px;top:831.2px;width:174.7px;height:44.8px;background:#c1c1a5;border-radius:4px;box-shadow:inset 0 0 0 1px rgba(90,90,40,.55)"></div>
<div class="t" style="left:146.1px;top:884.0px;font-size:12.2px;color:#262626;font-weight:bold;transform:scaleX(0.9551);">20%</div>
<div class="a" style="left:254.4px;top:824.6px;width:187.3px;height:75.4px;background:linear-gradient(#a6a6a6 0,#8e8e8e 35%,#5a5a5a 100%);border-radius:5px 5px 0 0;box-shadow:inset 1px 1px 0 #b8b8b8"></div>
<div class="a" style="left:441.7px;top:824.6px;width:2.8px;height:70.4px;background:#2c2c2c"></div>
<div class="a" style="left:260.7px;top:831.2px;width:174.7px;height:44.8px;background:#c1c08a;border-radius:4px;box-shadow:inset 0 0 0 1px rgba(90,90,40,.55)"></div>
<div class="t" style="left:336.2px;top:884.0px;font-size:12.2px;color:#262626;font-weight:bold;transform:scaleX(0.9551);">40%</div>
<div class="a" style="left:444.5px;top:824.6px;width:187.3px;height:75.4px;background:linear-gradient(#a6a6a6 0,#8e8e8e 35%,#5a5a5a 100%);border-radius:5px 5px 0 0;box-shadow:inset 1px 1px 0 #b8b8b8"></div>
<div class="a" style="left:631.8px;top:824.6px;width:2.8px;height:70.4px;background:#2c2c2c"></div>
<div class="a" style="left:450.8px;top:831.2px;width:174.7px;height:44.8px;background:#c0be6e;border-radius:4px;box-shadow:inset 0 0 0 1px rgba(90,90,40,.55)"></div>
<div class="t" style="left:526.3px;top:884.0px;font-size:12.2px;color:#262626;font-weight:bold;transform:scaleX(0.9551);">60%</div>
<div class="a" style="left:634.5px;top:824.6px;width:187.3px;height:75.4px;background:linear-gradient(#a6a6a6 0,#8e8e8e 35%,#5a5a5a 100%);border-radius:5px 5px 0 0;box-shadow:inset 1px 1px 0 #b8b8b8"></div>
<div class="a" style="left:821.8px;top:824.6px;width:2.8px;height:70.4px;background:#2c2c2c"></div>
<div class="a" style="left:640.8px;top:831.2px;width:174.7px;height:44.8px;background:#c1be52;border-radius:4px;box-shadow:inset 0 0 0 1px rgba(90,90,40,.55)"></div>
<div class="t" style="left:716.4px;top:884.0px;font-size:12.2px;color:#262626;font-weight:bold;transform:scaleX(0.9551);">80%</div>
<div class="a" style="left:824.6px;top:824.6px;width:187.3px;height:75.4px;background:linear-gradient(#1a1a1a,#343434);border-radius:5px 5px 0 0"></div>
<div class="a" style="left:830.9px;top:831.2px;width:174.7px;height:44.8px;background:#c4c000;border-radius:4px;box-shadow:inset 0 0 0 1px rgba(90,90,40,.55)"></div>
<div class="t" style="left:903.1px;top:884.0px;font-size:12.2px;color:#fff;font-weight:bold;transform:scaleX(0.9599);">100%</div>
<div class="a" style="left:1264.8px;top:824.6px;width:60.5px;height:22.3px;background:linear-gradient(#a4a4a4,#8a8a8a);border-radius:5px 5px 0 0"></div>
<div class="a" style="left:1264.8px;top:848.0px;width:60.5px;height:50.0px;background:linear-gradient(#8c8c8c,#5a5a5a)"></div>
<div class="a" style="left:1285.9px;top:826.6px;width:19.0px;height:19.0px;border-radius:50%;background:linear-gradient(#6c6c6c,#9a9a9a)"></div>
<div class="a" style="left:1275.3px;top:854.9px;width:39.0px;height:38.0px;box-sizing:border-box;border:3px solid #222;border-radius:7px;background:linear-gradient(#b2b2b2,#a8a8a8 56%,#8c8c8c 56%,#8a8a8a);box-shadow:0 0 1.5px #222"></div>
<div class="a" style="left:1286.8px;top:866.0px;width:17.2px;height:17.2px;background:linear-gradient(#1c1c1c 0,#1c1c1c 50%,#000 50%)"></div>
<div class="a" style="left:1325.8px;top:823.9px;width:57.4px;height:38.1px;background:linear-gradient(#a4a4a4,#7a7a7a);box-shadow:inset 1px 1px 0 #b6b6b6"></div>
<div class="a" style="left:1383.2px;top:823.9px;width:1.0px;height:38.1px;background:#484848"></div>
<div class="a" style="left:1343.0px;top:831.2px;width:24.6px;height:24.6px;border-radius:50%;background:linear-gradient(#686868,#9e9e9e)"></div>
<div class="a" style="left:1384.2px;top:823.9px;width:55.2px;height:38.1px;background:linear-gradient(#a4a4a4,#7a7a7a);box-shadow:inset 1px 1px 0 #b6b6b6"></div>
<div class="a" style="left:1439.4px;top:823.9px;width:1.0px;height:38.1px;background:#484848"></div>
<div class="a" style="left:1399.5px;top:831.2px;width:24.6px;height:24.6px;border-radius:50%;background:linear-gradient(#686868,#9e9e9e)"></div>
<div class="a" style="left:1440.4px;top:823.9px;width:55.3px;height:38.1px;background:linear-gradient(#a4a4a4,#7a7a7a);box-shadow:inset 1px 1px 0 #b6b6b6"></div>
<div class="a" style="left:1495.7px;top:823.9px;width:1.0px;height:38.1px;background:#484848"></div>
<div class="a" style="left:1455.9px;top:831.2px;width:24.6px;height:24.6px;border-radius:50%;background:linear-gradient(#686868,#9e9e9e)"></div>
<div class="a" style="left:1496.7px;top:823.9px;width:55.6px;height:38.1px;background:linear-gradient(#a4a4a4,#7a7a7a);box-shadow:inset 1px 1px 0 #b6b6b6"></div>
<div class="a" style="left:1552.3px;top:823.9px;width:1.0px;height:38.1px;background:#484848"></div>
<div class="a" style="left:1512.4px;top:831.2px;width:24.6px;height:24.6px;border-radius:50%;background:linear-gradient(#686868,#9e9e9e)"></div>
<div class="a" style="left:1553.3px;top:823.9px;width:54.7px;height:38.1px;background:linear-gradient(#a4a4a4,#7a7a7a);box-shadow:inset 1px 1px 0 #b6b6b6"></div>
<div class="a" style="left:1608.0px;top:823.9px;width:1.0px;height:38.1px;background:#484848"></div>
<div class="a" style="left:1568.8px;top:831.2px;width:24.6px;height:24.6px;border-radius:50%;background:linear-gradient(#686868,#9e9e9e)"></div>
<div class="a" style="left:1609.4px;top:823.9px;width:30.0px;height:37.8px;background:#2a2a2a"></div>
<div class="a" style="left:1325.8px;top:862.0px;width:310.0px;height:1.3px;background:#3a3a3a"></div>
<div class="a" style="left:1326.2px;top:863.3px;width:170.1px;height:40.0px;background:linear-gradient(#a6a6a6,#7c7c7c);border-radius:5px 0 0 0;box-shadow:inset 1px 1px 0 #bababa"></div>
<div class="a" style="left:1496.3px;top:863.3px;width:1.3px;height:40.0px;background:#484848"></div>
<div class="a" style="left:1497.6px;top:863.3px;width:140.0px;height:40.0px;background:linear-gradient(#a6a6a6,#7c7c7c);box-shadow:inset 1px 1px 0 #bababa"></div>
<div class="a" style="left:1353.3px;top:869.7px;width:24.0px;height:24.0px;border-radius:50%;background:linear-gradient(#7a7a7a,#a6a6a6)"></div>
<div class="a" style="left:1619.0px;top:869.7px;width:24.0px;height:24.0px;border-radius:50%;background:linear-gradient(#7a7a7a,#a6a6a6)"></div>
<div class="a" style="left:1626.0px;top:831.5px;width:23.0px;height:23.0px;border-radius:50%;background:linear-gradient(#3a3a3a,#4a4a4a)"></div>
<div class="t" style="left:1399.0px;top:869.0px;font-size:26.0px;color:#2e2e2e;transform:scaleX(1.0726);text-shadow:0 0 1.2px #2e2e2e;">Back</div>
<div class="t" style="left:1532.5px;top:869.0px;font-size:26.0px;color:#2e2e2e;transform:scaleX(1.1822);text-shadow:0 0 1.2px #2e2e2e;">Next</div>
<div class="t" style="left:1358.0px;top:869.5px;font-size:24.0px;color:#333;">«</div>
<div class="t" style="left:1625.9px;top:869.5px;font-size:24.0px;color:#333;">»</div>
<svg class="a" style="left:0;top:0;pointer-events:none" width="1633" height="895" viewBox="0 0 1633 895"><defs><linearGradient id="g1" x1="0" x2="1" y1="0" y2="0"><stop offset="0" stop-color="#d84747"/><stop offset=".14" stop-color="#c90000"/><stop offset=".72" stop-color="#b50000"/><stop offset="1" stop-color="#550000"/></linearGradient><linearGradient id="g2" x1="0" x2="1" y1="0" y2="0"><stop offset="0" stop-color="#47cc47"/><stop offset=".14" stop-color="#00b800"/><stop offset=".72" stop-color="#00a500"/><stop offset="1" stop-color="#004d00"/></linearGradient><linearGradient id="g3" x1="0" x2="1" y1="0" y2="0"><stop offset="0" stop-color="#4747d8"/><stop offset=".14" stop-color="#0000c9"/><stop offset=".72" stop-color="#0000b5"/><stop offset="1" stop-color="#000055"/></linearGradient><linearGradient id="g4" x1="0" x2="1" y1="0" y2="0"><stop offset="0" stop-color="#47d8d8"/><stop offset=".14" stop-color="#00c9c9"/><stop offset=".72" stop-color="#00b5b5"/><stop offset="1" stop-color="#005555"/></linearGradient><linearGradient id="g5" x1="0" x2="1" y1="0" y2="0"><stop offset="0" stop-color="#d847d8"/><stop offset=".14" stop-color="#c900c9"/><stop offset=".72" stop-color="#b500b5"/><stop offset="1" stop-color="#550055"/></linearGradient><linearGradient id="g6" x1="0" x2="1" y1="0" y2="0"><stop offset="0" stop-color="#d8d847"/><stop offset=".14" stop-color="#c9c900"/><stop offset=".72" stop-color="#b5b500"/><stop offset="1" stop-color="#555500"/></linearGradient><linearGradient id="g7" x1="0" x2="1" y1="0" y2="0"><stop offset="0" stop-color="#d87575"/><stop offset=".14" stop-color="#c93f3f"/><stop offset=".72" stop-color="#b53939"/><stop offset="1" stop-color="#551a1a"/></linearGradient><linearGradient id="g8" x1="0" x2="1" y1="0" y2="0"><stop offset="0" stop-color="#75cc75"/><stop offset=".14" stop-color="#3fb83f"/><stop offset=".72" stop-color="#39a539"/><stop offset="1" stop-color="#1a4d1a"/></linearGradient><linearGradient id="g9" x1="0" x2="1" y1="0" y2="0"><stop offset="0" stop-color="#7575d8"/><stop offset=".14" stop-color="#3f3fc9"/><stop offset=".72" stop-color="#3939b5"/><stop offset="1" stop-color="#1a1a55"/></linearGradient><linearGradient id="g10" x1="0" x2="1" y1="0" y2="0"><stop offset="0" stop-color="#75d8d8"/><stop offset=".14" stop-color="#3fc9c9"/><stop offset=".72" stop-color="#39b5b5"/><stop offset="1" stop-color="#1a5555"/></linearGradient><linearGradient id="g11" x1="0" x2="1" y1="0" y2="0"><stop offset="0" stop-color="#d875d8"/><stop offset=".14" stop-color="#c93fc9"/><stop offset=".72" stop-color="#b539b5"/><stop offset="1" stop-color="#551a55"/></linearGradient><linearGradient id="g12" x1="0" x2="1" y1="0" y2="0"><stop offset="0" stop-color="#d8d875"/><stop offset=".14" stop-color="#c9c93f"/><stop offset=".72" stop-color="#b5b539"/><stop offset="1" stop-color="#55551a"/></linearGradient><linearGradient id="g13" x1="0" x2="1" y1="0" y2="0"><stop offset="0" stop-color="#d89191"/><stop offset=".14" stop-color="#c96666"/><stop offset=".72" stop-color="#b55c5c"/><stop offset="1" stop-color="#552b2b"/></linearGradient><linearGradient id="g14" x1="0" x2="1" y1="0" y2="0"><stop offset="0" stop-color="#91cc91"/><stop offset=".14" stop-color="#66b866"/><stop offset=".72" stop-color="#5ca55c"/><stop offset="1" stop-color="#2b4d2b"/></linearGradient><linearGradient id="g15" x1="0" x2="1" y1="0" y2="0"><stop offset="0" stop-color="#9191d8"/><stop offset=".14" stop-color="#6666c9"/><stop offset=".72" stop-color="#5c5cb5"/><stop offset="1" stop-color="#2b2b55"/></linearGradient><linearGradient id="g16" x1="0" x2="1" y1="0" y2="0"><stop offset="0" stop-color="#91d8d8"/><stop offset=".14" stop-color="#66c9c9"/><stop offset=".72" stop-color="#5cb5b5"/><stop offset="1" stop-color="#2b5555"/></linearGradient><linearGradient id="g17" x1="0" x2="1" y1="0" y2="0"><stop offset="0" stop-color="#d891d8"/><stop offset=".14" stop-color="#c966c9"/><stop offset=".72" stop-color="#b55cb5"/><stop offset="1" stop-color="#552b55"/></linearGradient><linearGradient id="g18" x1="0" x2="1" y1="0" y2="0"><stop offset="0" stop-color="#d8d891"/><stop offset=".14" stop-color="#c9c966"/><stop offset=".72" stop-color="#b5b55c"/><stop offset="1" stop-color="#55552b"/></linearGradient><linearGradient id="g19" x1="0" x2="1" y1="0" y2="0"><stop offset="0" stop-color="#d8a9a9"/><stop offset=".14" stop-color="#c98888"/><stop offset=".72" stop-color="#b57a7a"/><stop offset="1" stop-color="#553939"/></linearGradient><linearGradient id="g20" x1="0" x2="1" y1="0" y2="0"><stop offset="0" stop-color="#a9cca9"/><stop offset=".14" stop-color="#88b888"/><stop offset=".72" stop-color="#7aa57a"/><stop offset="1" stop-color="#394d39"/></linearGradient><linearGradient id="g21" x1="0" x2="1" y1="0" y2="0"><stop offset="0" stop-color="#a9a9d8"/><stop offset=".14" stop-color="#8888c9"/><stop offset=".72" stop-color="#7a7ab5"/><stop offset="1" stop-color="#393955"/></linearGradient><linearGradient id="g22" x1="0" x2="1" y1="0" y2="0"><stop offset="0" stop-color="#a9d8d8"/><stop offset=".14" stop-color="#88c9c9"/><stop offset=".72" stop-color="#7ab5b5"/><stop offset="1" stop-color="#395555"/></linearGradient><linearGradient id="g23" x1="0" x2="1" y1="0" y2="0"><stop offset="0" stop-color="#d8a9d8"/><stop offset=".14" stop-color="#c988c9"/><stop offset=".72" stop-color="#b57ab5"/><stop offset="1" stop-color="#553955"/></linearGradient><linearGradient id="g24" x1="0" x2="1" y1="0" y2="0"><stop offset="0" stop-color="#d8d8a9"/><stop offset=".14" stop-color="#c9c988"/><stop offset=".72" stop-color="#b5b57a"/><stop offset="1" stop-color="#555539"/></linearGradient><linearGradient id="g25" x1="0" x2="1" y1="0" y2="0"><stop offset="0" stop-color="#d8bfbf"/><stop offset=".14" stop-color="#c9a6a6"/><stop offset=".72" stop-color="#b59595"/><stop offset="1" stop-color="#554646"/></linearGradient><linearGradient id="g26" x1="0" x2="1" y1="0" y2="0"><stop offset="0" stop-color="#bfccbf"/><stop offset=".14" stop-color="#a6b8a6"/><stop offset=".72" stop-color="#95a595"/><stop offset="1" stop-color="#464d46"/></linearGradient><linearGradient id="g27" x1="0" x2="1" y1="0" y2="0"><stop offset="0" stop-color="#bfbfd8"/><stop offset=".14" stop-color="#a6a6c9"/><stop offset=".72" stop-color="#9595b5"/><stop offset="1" stop-color="#464655"/></linearGradient><linearGradient id="g28" x1="0" x2="1" y1="0" y2="0"><stop offset="0" stop-color="#bfd8d8"/><stop offset=".14" stop-color="#a6c9c9"/><stop offset=".72" stop-color="#95b5b5"/><stop offset="1" stop-color="#465555"/></linearGradient><linearGradient id="g29" x1="0" x2="1" y1="0" y2="0"><stop offset="0" stop-color="#d8bfd8"/><stop offset=".14" stop-color="#c9a6c9"/><stop offset=".72" stop-color="#b595b5"/><stop offset="1" stop-color="#554655"/></linearGradient><linearGradient id="g30" x1="0" x2="1" y1="0" y2="0"><stop offset="0" stop-color="#d8d8bf"/><stop offset=".14" stop-color="#c9c9a6"/><stop offset=".72" stop-color="#b5b595"/><stop offset="1" stop-color="#555546"/></linearGradient><linearGradient id="g31" x1="0" x2="1" y1="0" y2="0"><stop offset="0" stop-color="#f2f2f2"/><stop offset=".14" stop-color="#ededed"/><stop offset=".72" stop-color="#d5d5d5"/><stop offset="1" stop-color="#646464"/></linearGradient><linearGradient id="g32" x1="0" x2="0" y1="0" y2="1"><stop offset="0" stop-color="#d2d200"/><stop offset="0.5" stop-color="#c0c000"/><stop offset="1" stop-color="#7c7c00"/></linearGradient><linearGradient id="g33" x1="0" x2="0" y1="0" y2="1"><stop offset="0" stop-color="#c6c600"/><stop offset="0.4" stop-color="#c2c200"/><stop offset="1" stop-color="#4c4c00"/></linearGradient><linearGradient id="g34" x1="0" x2="0" y1="0" y2="1"><stop offset="0" stop-color="#d2d200"/><stop offset="1" stop-color="#8c8c00"/></linearGradient><linearGradient id="g35" x1="0" x2="0" y1="0" y2="1"><stop offset="0" stop-color="#ff1010"/><stop offset="1" stop-color="#d80000"/></linearGradient><linearGradient id="g36" x1="0" x2="0" y1="0" y2="1"><stop offset="0" stop-color="#20a020"/><stop offset="1" stop-color="#107010"/></linearGradient><linearGradient id="g37" x1="0" x2="0" y1="0" y2="1"><stop offset="0" stop-color="#2a2aff"/><stop offset="0.45" stop-color="#1010f0"/><stop offset="1" stop-color="#00008c"/></linearGradient></defs>
<path d="M374.4,61h9.4l-4.7,-4.9z" fill="#474747"/><path d="M374.4,100.2h9.4l-4.7,6z" fill="#474747"/>
<rect x="68.4" y="144.0" width="302.3" height="400.0" fill="#262626"/>
<line x1="108.4" y1="144.0" x2="108.4" y2="544.0" stroke="#8c8c8c" stroke-width="1.3"/>
<line x1="149.4" y1="144.0" x2="149.4" y2="544.0" stroke="#8c8c8c" stroke-width="1.3"/>
<line x1="188.5" y1="144.0" x2="188.5" y2="544.0" stroke="#8c8c8c" stroke-width="1.3"/>
<line x1="229.3" y1="144.0" x2="229.3" y2="544.0" stroke="#8c8c8c" stroke-width="1.3"/>
<line x1="269.3" y1="144.0" x2="269.3" y2="544.0" stroke="#8c8c8c" stroke-width="1.3"/>
<line x1="309.2" y1="144.0" x2="309.2" y2="544.0" stroke="#8c8c8c" stroke-width="1.3"/>
<line x1="349.2" y1="144.0" x2="349.2" y2="544.0" stroke="#8c8c8c" stroke-width="1.3"/>
<rect x="68.4" y="144.0" width="302.3" height="400.0" fill="none" stroke="#a8a8a8" stroke-width="1.5"/>
<text x="202.2" y="139.1" font-size="14.8" text-anchor="middle" fill="#d4d4d4" textLength="76.0" lengthAdjust="spacingAndGlyphs" >DeltaE 2000</text>
<text x="68.4" y="564.8" font-size="14.5" text-anchor="middle" fill="#d4d4d4" textLength="8.0" lengthAdjust="spacingAndGlyphs" >0</text>
<text x="108.4" y="564.8" font-size="14.5" text-anchor="middle" fill="#d4d4d4" textLength="8.0" lengthAdjust="spacingAndGlyphs" >2</text>
<text x="149.4" y="564.8" font-size="14.5" text-anchor="middle" fill="#d4d4d4" textLength="8.0" lengthAdjust="spacingAndGlyphs" >4</text>
<text x="188.5" y="564.8" font-size="14.5" text-anchor="middle" fill="#d4d4d4" textLength="8.0" lengthAdjust="spacingAndGlyphs" >6</text>
<text x="229.3" y="564.8" font-size="14.5" text-anchor="middle" fill="#d4d4d4" textLength="8.0" lengthAdjust="spacingAndGlyphs" >8</text>
<text x="269.3" y="564.8" font-size="14.5" text-anchor="middle" fill="#d4d4d4" textLength="16.0" lengthAdjust="spacingAndGlyphs" >10</text>
<text x="309.2" y="564.8" font-size="14.5" text-anchor="middle" fill="#d4d4d4" textLength="16.0" lengthAdjust="spacingAndGlyphs" >12</text>
<text x="349.2" y="564.8" font-size="14.5" text-anchor="middle" fill="#d4d4d4" textLength="16.0" lengthAdjust="spacingAndGlyphs" >14</text>
<line x1="63.5" y1="144.0" x2="68.4" y2="144.0" stroke="#ddd" stroke-width="1.6"/>
<line x1="63.5" y1="210.7" x2="68.4" y2="210.7" stroke="#ddd" stroke-width="1.6"/>
<line x1="63.5" y1="277.3" x2="68.4" y2="277.3" stroke="#ddd" stroke-width="1.6"/>
<line x1="63.5" y1="344.0" x2="68.4" y2="344.0" stroke="#ddd" stroke-width="1.6"/>
<line x1="63.5" y1="410.7" x2="68.4" y2="410.7" stroke="#ddd" stroke-width="1.6"/>
<line x1="63.5" y1="477.4" x2="68.4" y2="477.4" stroke="#ddd" stroke-width="1.6"/>
<line x1="63.5" y1="544.0" x2="68.4" y2="544.0" stroke="#ddd" stroke-width="1.6"/>
<text x="67.9" y="183.0" font-size="14.5" text-anchor="end" fill="#d4d4d4" textLength="36.0" lengthAdjust="spacingAndGlyphs" >100%</text>
<text x="67.9" y="249.4" font-size="14.5" text-anchor="end" fill="#d4d4d4" textLength="28.1" lengthAdjust="spacingAndGlyphs" >80%</text>
<text x="67.9" y="315.6" font-size="14.5" text-anchor="end" fill="#d4d4d4" textLength="28.1" lengthAdjust="spacingAndGlyphs" >60%</text>
<text x="67.9" y="383.6" font-size="14.5" text-anchor="end" fill="#d4d4d4" textLength="28.1" lengthAdjust="spacingAndGlyphs" >40%</text>
<text x="67.9" y="448.7" font-size="14.5" text-anchor="end" fill="#d4d4d4" textLength="28.1" lengthAdjust="spacingAndGlyphs" >20%</text>
<text x="67.9" y="516.6" font-size="14.5" text-anchor="end" fill="#d4d4d4" textLength="23.9" lengthAdjust="spacingAndGlyphs" >100</text>
<rect x="69.0" y="151.0" width="89.4" height="6.2" fill="url(#g1)" stroke="#000" stroke-width="1.3"/>
<rect x="69.0" y="158.9" width="125.4" height="6.2" fill="url(#g2)" stroke="#000" stroke-width="1.3"/>
<rect x="69.0" y="166.8" width="69.3" height="6.2" fill="url(#g3)" stroke="#000" stroke-width="1.3"/>
<rect x="69.0" y="174.7" width="121.0" height="6.2" fill="url(#g4)" stroke="#000" stroke-width="1.3"/>
<rect x="69.0" y="182.6" width="93.3" height="6.2" fill="url(#g5)" stroke="#000" stroke-width="1.3"/>
<rect x="69.0" y="190.5" width="90.2" height="6.2" fill="url(#g6)" stroke="#000" stroke-width="1.3"/>
<rect x="69.0" y="217.7" width="93.3" height="6.2" fill="url(#g7)" stroke="#000" stroke-width="1.3"/>
<rect x="69.0" y="225.6" width="130.2" height="6.2" fill="url(#g8)" stroke="#000" stroke-width="1.3"/>
<rect x="69.0" y="233.5" width="63.1" height="6.2" fill="url(#g9)" stroke="#000" stroke-width="1.3"/>
<rect x="69.0" y="241.4" width="123.2" height="6.2" fill="url(#g10)" stroke="#000" stroke-width="1.3"/>
<rect x="69.0" y="249.3" width="74.3" height="6.2" fill="url(#g11)" stroke="#000" stroke-width="1.3"/>
<rect x="69.0" y="257.2" width="68.2" height="6.2" fill="url(#g12)" stroke="#000" stroke-width="1.3"/>
<rect x="69.0" y="284.3" width="93.3" height="6.2" fill="url(#g13)" stroke="#000" stroke-width="1.3"/>
<rect x="69.0" y="292.2" width="130.4" height="6.2" fill="url(#g14)" stroke="#000" stroke-width="1.3"/>
<rect x="69.0" y="300.1" width="72.3" height="6.2" fill="url(#g15)" stroke="#000" stroke-width="1.3"/>
<rect x="69.0" y="308.0" width="119.3" height="6.2" fill="url(#g16)" stroke="#000" stroke-width="1.3"/>
<rect x="69.0" y="315.9" width="81.0" height="6.2" fill="url(#g17)" stroke="#000" stroke-width="1.3"/>
<rect x="69.0" y="323.8" width="54.7" height="6.2" fill="url(#g18)" stroke="#000" stroke-width="1.3"/>
<rect x="69.0" y="351.0" width="96.1" height="6.2" fill="url(#g19)" stroke="#000" stroke-width="1.3"/>
<rect x="69.0" y="358.9" width="121.0" height="6.2" fill="url(#g20)" stroke="#000" stroke-width="1.3"/>
<rect x="69.0" y="366.8" width="76.0" height="6.2" fill="url(#g21)" stroke="#000" stroke-width="1.3"/>
<rect x="69.0" y="374.7" width="115.1" height="6.2" fill="url(#g22)" stroke="#000" stroke-width="1.3"/>
<rect x="69.0" y="382.6" width="80.2" height="6.2" fill="url(#g23)" stroke="#000" stroke-width="1.3"/>
<rect x="69.0" y="390.5" width="48.3" height="6.2" fill="url(#g24)" stroke="#000" stroke-width="1.3"/>
<rect x="69.0" y="417.7" width="88.3" height="6.2" fill="url(#g25)" stroke="#000" stroke-width="1.3"/>
<rect x="69.0" y="425.6" width="106.1" height="6.2" fill="url(#g26)" stroke="#000" stroke-width="1.3"/>
<rect x="69.0" y="433.5" width="86.3" height="6.2" fill="url(#g27)" stroke="#000" stroke-width="1.3"/>
<rect x="69.0" y="441.4" width="108.9" height="6.2" fill="url(#g28)" stroke="#000" stroke-width="1.3"/>
<rect x="69.0" y="449.3" width="80.2" height="6.2" fill="url(#g29)" stroke="#000" stroke-width="1.3"/>
<rect x="69.0" y="457.2" width="60.0" height="6.2" fill="url(#g30)" stroke="#000" stroke-width="1.3"/>
<rect x="69.2" y="531.4" width="111.0" height="6.2" fill="url(#g31)" stroke="#000" stroke-width="1"/>
<rect x="421.6" y="77.6" width="139.9" height="307.0" fill="#262626"/>
<line x1="421.6" y1="79.3" x2="561.5" y2="79.3" stroke="#8c8c8c" stroke-width="1.3"/>
<line x1="417.1" y1="79.3" x2="421.6" y2="79.3" stroke="#ddd" stroke-width="1.4"/>
<text x="416.0" y="84.9" font-size="14.5" text-anchor="end" fill="#d4d4d4" textLength="16.0" lengthAdjust="spacingAndGlyphs" >15</text>
<line x1="421.6" y1="130.3" x2="561.5" y2="130.3" stroke="#8c8c8c" stroke-width="1.3"/>
<line x1="417.1" y1="130.3" x2="421.6" y2="130.3" stroke="#ddd" stroke-width="1.4"/>
<text x="416.0" y="135.9" font-size="14.5" text-anchor="end" fill="#d4d4d4" textLength="16.0" lengthAdjust="spacingAndGlyphs" >10</text>
<line x1="421.6" y1="181.3" x2="561.5" y2="181.3" stroke="#8c8c8c" stroke-width="1.3"/>
<line x1="417.1" y1="181.3" x2="421.6" y2="181.3" stroke="#ddd" stroke-width="1.4"/>
<text x="416.0" y="186.9" font-size="14.5" text-anchor="end" fill="#d4d4d4" textLength="8.0" lengthAdjust="spacingAndGlyphs" >5</text>
<line x1="421.6" y1="232.3" x2="561.5" y2="232.3" stroke="#8c8c8c" stroke-width="1.3"/>
<line x1="417.1" y1="232.3" x2="421.6" y2="232.3" stroke="#ddd" stroke-width="1.4"/>
<text x="416.0" y="237.9" font-size="14.5" text-anchor="end" fill="#d4d4d4" textLength="8.0" lengthAdjust="spacingAndGlyphs" >0</text>
<line x1="421.6" y1="283.3" x2="561.5" y2="283.3" stroke="#8c8c8c" stroke-width="1.3"/>
<line x1="417.1" y1="283.3" x2="421.6" y2="283.3" stroke="#ddd" stroke-width="1.4"/>
<text x="416.0" y="288.9" font-size="14.5" text-anchor="end" fill="#d4d4d4" textLength="13.9" lengthAdjust="spacingAndGlyphs" >-5</text>
<line x1="421.6" y1="334.3" x2="561.5" y2="334.3" stroke="#8c8c8c" stroke-width="1.3"/>
<line x1="417.1" y1="334.3" x2="421.6" y2="334.3" stroke="#ddd" stroke-width="1.4"/>
<text x="416.0" y="339.9" font-size="14.5" text-anchor="end" fill="#d4d4d4" textLength="21.9" lengthAdjust="spacingAndGlyphs" >-10</text>
<line x1="417.1" y1="384.3" x2="421.6" y2="384.3" stroke="#ddd" stroke-width="1.4"/>
<text x="416.0" y="389.9" font-size="14.5" text-anchor="end" fill="#d4d4d4" textLength="21.9" lengthAdjust="spacingAndGlyphs" >-15</text>
<rect x="435.8" y="232.3" width="110.6" height="17.6" fill="url(#g32)" stroke="#000" stroke-width="1"/>
<rect x="421.6" y="77.6" width="139.9" height="307.0" fill="none" stroke="#a8a8a8" stroke-width="1.5"/>
<line x1="421.6" y1="384.6" x2="421.6" y2="389.1" stroke="#ddd" stroke-width="1.4"/>
<line x1="561.5" y1="384.6" x2="561.5" y2="389.1" stroke="#ddd" stroke-width="1.4"/>
<text x="478.6" y="73.1" font-size="14.8" text-anchor="middle" fill="#d4d4d4" textLength="40.2" lengthAdjust="spacingAndGlyphs" >DeltaL</text>
<text x="491.6" y="399.6" font-size="14.5" text-anchor="middle" fill="#d4d4d4" textLength="36.0" lengthAdjust="spacingAndGlyphs" >100%</text>
<rect x="612.6" y="77.6" width="139.6" height="307.0" fill="#262626"/>
<line x1="612.6" y1="79.3" x2="752.2" y2="79.3" stroke="#8c8c8c" stroke-width="1.3"/>
<line x1="608.1" y1="79.3" x2="612.6" y2="79.3" stroke="#ddd" stroke-width="1.4"/>
<text x="607.0" y="84.9" font-size="14.5" text-anchor="end" fill="#d4d4d4" textLength="16.0" lengthAdjust="spacingAndGlyphs" >15</text>
<line x1="612.6" y1="130.3" x2="752.2" y2="130.3" stroke="#8c8c8c" stroke-width="1.3"/>
<line x1="608.1" y1="130.3" x2="612.6" y2="130.3" stroke="#ddd" stroke-width="1.4"/>
<text x="607.0" y="135.9" font-size="14.5" text-anchor="end" fill="#d4d4d4" textLength="16.0" lengthAdjust="spacingAndGlyphs" >10</text>
<line x1="612.6" y1="181.3" x2="752.2" y2="181.3" stroke="#8c8c8c" stroke-width="1.3"/>
<line x1="608.1" y1="181.3" x2="612.6" y2="181.3" stroke="#ddd" stroke-width="1.4"/>
<text x="607.0" y="186.9" font-size="14.5" text-anchor="end" fill="#d4d4d4" textLength="8.0" lengthAdjust="spacingAndGlyphs" >5</text>
<line x1="612.6" y1="232.3" x2="752.2" y2="232.3" stroke="#8c8c8c" stroke-width="1.3"/>
<line x1="608.1" y1="232.3" x2="612.6" y2="232.3" stroke="#ddd" stroke-width="1.4"/>
<text x="607.0" y="237.9" font-size="14.5" text-anchor="end" fill="#d4d4d4" textLength="8.0" lengthAdjust="spacingAndGlyphs" >0</text>
<line x1="612.6" y1="283.3" x2="752.2" y2="283.3" stroke="#8c8c8c" stroke-width="1.3"/>
<line x1="608.1" y1="283.3" x2="612.6" y2="283.3" stroke="#ddd" stroke-width="1.4"/>
<text x="607.0" y="288.9" font-size="14.5" text-anchor="end" fill="#d4d4d4" textLength="13.9" lengthAdjust="spacingAndGlyphs" >-5</text>
<line x1="612.6" y1="334.3" x2="752.2" y2="334.3" stroke="#8c8c8c" stroke-width="1.3"/>
<line x1="608.1" y1="334.3" x2="612.6" y2="334.3" stroke="#ddd" stroke-width="1.4"/>
<text x="607.0" y="339.9" font-size="14.5" text-anchor="end" fill="#d4d4d4" textLength="21.9" lengthAdjust="spacingAndGlyphs" >-10</text>
<line x1="608.1" y1="384.3" x2="612.6" y2="384.3" stroke="#ddd" stroke-width="1.4"/>
<text x="607.0" y="389.9" font-size="14.5" text-anchor="end" fill="#d4d4d4" textLength="21.9" lengthAdjust="spacingAndGlyphs" >-15</text>
<rect x="626.9" y="78.5" width="110.6" height="153.8" fill="url(#g33)" stroke="#000" stroke-width="1"/>
<rect x="612.6" y="77.6" width="139.6" height="307.0" fill="none" stroke="#a8a8a8" stroke-width="1.5"/>
<line x1="612.6" y1="384.6" x2="612.6" y2="389.1" stroke="#ddd" stroke-width="1.4"/>
<line x1="752.2" y1="384.6" x2="752.2" y2="389.1" stroke="#ddd" stroke-width="1.4"/>
<text x="669.8" y="73.1" font-size="14.8" text-anchor="middle" fill="#d4d4d4" textLength="42.3" lengthAdjust="spacingAndGlyphs" >DeltaC</text>
<text x="682.4" y="399.6" font-size="14.5" text-anchor="middle" fill="#d4d4d4" textLength="36.0" lengthAdjust="spacingAndGlyphs" >100%</text>
<rect x="803.3" y="77.6" width="139.9" height="307.0" fill="#262626"/>
<line x1="803.3" y1="79.3" x2="943.2" y2="79.3" stroke="#8c8c8c" stroke-width="1.3"/>
<line x1="798.8" y1="79.3" x2="803.3" y2="79.3" stroke="#ddd" stroke-width="1.4"/>
<text x="797.7" y="84.9" font-size="14.5" text-anchor="end" fill="#d4d4d4" textLength="16.0" lengthAdjust="spacingAndGlyphs" >15</text>
<line x1="803.3" y1="130.3" x2="943.2" y2="130.3" stroke="#8c8c8c" stroke-width="1.3"/>
<line x1="798.8" y1="130.3" x2="803.3" y2="130.3" stroke="#ddd" stroke-width="1.4"/>
<text x="797.7" y="135.9" font-size="14.5" text-anchor="end" fill="#d4d4d4" textLength="16.0" lengthAdjust="spacingAndGlyphs" >10</text>
<line x1="803.3" y1="181.3" x2="943.2" y2="181.3" stroke="#8c8c8c" stroke-width="1.3"/>
<line x1="798.8" y1="181.3" x2="803.3" y2="181.3" stroke="#ddd" stroke-width="1.4"/>
<text x="797.7" y="186.9" font-size="14.5" text-anchor="end" fill="#d4d4d4" textLength="8.0" lengthAdjust="spacingAndGlyphs" >5</text>
<line x1="803.3" y1="232.3" x2="943.2" y2="232.3" stroke="#8c8c8c" stroke-width="1.3"/>
<line x1="798.8" y1="232.3" x2="803.3" y2="232.3" stroke="#ddd" stroke-width="1.4"/>
<text x="797.7" y="237.9" font-size="14.5" text-anchor="end" fill="#d4d4d4" textLength="8.0" lengthAdjust="spacingAndGlyphs" >0</text>
<line x1="803.3" y1="283.3" x2="943.2" y2="283.3" stroke="#8c8c8c" stroke-width="1.3"/>
<line x1="798.8" y1="283.3" x2="803.3" y2="283.3" stroke="#ddd" stroke-width="1.4"/>
<text x="797.7" y="288.9" font-size="14.5" text-anchor="end" fill="#d4d4d4" textLength="13.9" lengthAdjust="spacingAndGlyphs" >-5</text>
<line x1="803.3" y1="334.3" x2="943.2" y2="334.3" stroke="#8c8c8c" stroke-width="1.3"/>
<line x1="798.8" y1="334.3" x2="803.3" y2="334.3" stroke="#ddd" stroke-width="1.4"/>
<text x="797.7" y="339.9" font-size="14.5" text-anchor="end" fill="#d4d4d4" textLength="21.9" lengthAdjust="spacingAndGlyphs" >-10</text>
<line x1="798.8" y1="384.3" x2="803.3" y2="384.3" stroke="#ddd" stroke-width="1.4"/>
<text x="797.7" y="389.9" font-size="14.5" text-anchor="end" fill="#d4d4d4" textLength="21.9" lengthAdjust="spacingAndGlyphs" >-15</text>
<rect x="817.5" y="232.3" width="111.0" height="7.5" fill="url(#g34)" stroke="#000" stroke-width="1"/>
<rect x="803.3" y="77.6" width="139.9" height="307.0" fill="none" stroke="#a8a8a8" stroke-width="1.5"/>
<line x1="803.3" y1="384.6" x2="803.3" y2="389.1" stroke="#ddd" stroke-width="1.4"/>
<line x1="943.2" y1="384.6" x2="943.2" y2="389.1" stroke="#ddd" stroke-width="1.4"/>
<text x="860.5" y="73.1" font-size="14.8" text-anchor="middle" fill="#d4d4d4" textLength="43.1" lengthAdjust="spacingAndGlyphs" >DeltaH</text>
<text x="873.2" y="399.6" font-size="14.5" text-anchor="middle" fill="#d4d4d4" textLength="36.0" lengthAdjust="spacingAndGlyphs" >100%</text>
<text x="0.0" y="0.0" font-size="11.6" text-anchor="middle" fill="#fff" textLength="33.0" lengthAdjust="spacingAndGlyphs" stroke="#fff" stroke-width=".35" transform="translate(402.3,451.6) rotate(-90)">Actual</text>
<text x="0.0" y="0.0" font-size="11.6" text-anchor="middle" fill="#fff" textLength="33.0" lengthAdjust="spacingAndGlyphs" stroke="#fff" stroke-width=".35" transform="translate(402.3,523.4) rotate(-90)">Target</text>
<rect x="1011.6" y="76.9" width="618.7" height="476.4" fill="none" stroke="#a8a8a8" stroke-width="1.5"/>
<text x="1305.1" y="72.0" font-size="14.8" text-anchor="middle" fill="#d4d4d4" textLength="81.8" lengthAdjust="spacingAndGlyphs" >CIE 1976 u'v'</text>
<line x1="1011.9" y1="553.3" x2="1011.9" y2="558.3" stroke="#ddd" stroke-width="1.4"/>
<text x="1011.9" y="573.6" font-size="14.5" text-anchor="middle" fill="#d4d4d4" textLength="8.0" lengthAdjust="spacingAndGlyphs" >0</text>
<line x1="1007.1" y1="553.7" x2="1011.6" y2="553.7" stroke="#ddd" stroke-width="1.4"/>
<text x="1005.6" y="559.5" font-size="14.5" text-anchor="end" fill="#d4d4d4" textLength="8.0" lengthAdjust="spacingAndGlyphs" >0</text>
<line x1="1063.4" y1="553.3" x2="1063.4" y2="558.3" stroke="#ddd" stroke-width="1.4"/>
<text x="1063.4" y="573.6" font-size="14.5" text-anchor="middle" fill="#d4d4d4" textLength="27.1" lengthAdjust="spacingAndGlyphs" >0,05</text>
<line x1="1007.1" y1="514.1" x2="1011.6" y2="514.1" stroke="#ddd" stroke-width="1.4"/>
<text x="1005.6" y="519.9" font-size="14.5" text-anchor="end" fill="#d4d4d4" textLength="27.1" lengthAdjust="spacingAndGlyphs" >0,05</text>
<line x1="1114.9" y1="553.3" x2="1114.9" y2="558.3" stroke="#ddd" stroke-width="1.4"/>
<text x="1114.9" y="573.6" font-size="14.5" text-anchor="middle" fill="#d4d4d4" textLength="19.2" lengthAdjust="spacingAndGlyphs" >0,1</text>
<line x1="1007.1" y1="474.4" x2="1011.6" y2="474.4" stroke="#ddd" stroke-width="1.4"/>
<text x="1005.6" y="480.2" font-size="14.5" text-anchor="end" fill="#d4d4d4" textLength="19.2" lengthAdjust="spacingAndGlyphs" >0,1</text>
<line x1="1166.4" y1="553.3" x2="1166.4" y2="558.3" stroke="#ddd" stroke-width="1.4"/>
<text x="1166.4" y="573.6" font-size="14.5" text-anchor="middle" fill="#d4d4d4" textLength="27.1" lengthAdjust="spacingAndGlyphs" >0,15</text>
<line x1="1007.1" y1="434.8" x2="1011.6" y2="434.8" stroke="#ddd" stroke-width="1.4"/>
<text x="1005.6" y="440.6" font-size="14.5" text-anchor="end" fill="#d4d4d4" textLength="27.1" lengthAdjust="spacingAndGlyphs" >0,15</text>
<line x1="1217.9" y1="553.3" x2="1217.9" y2="558.3" stroke="#ddd" stroke-width="1.4"/>
<text x="1217.9" y="573.6" font-size="14.5" text-anchor="middle" fill="#d4d4d4" textLength="19.2" lengthAdjust="spacingAndGlyphs" >0,2</text>
<line x1="1007.1" y1="395.1" x2="1011.6" y2="395.1" stroke="#ddd" stroke-width="1.4"/>
<text x="1005.6" y="400.9" font-size="14.5" text-anchor="end" fill="#d4d4d4" textLength="19.2" lengthAdjust="spacingAndGlyphs" >0,2</text>
<line x1="1269.3" y1="553.3" x2="1269.3" y2="558.3" stroke="#ddd" stroke-width="1.4"/>
<text x="1269.3" y="573.6" font-size="14.5" text-anchor="middle" fill="#d4d4d4" textLength="27.1" lengthAdjust="spacingAndGlyphs" >0,25</text>
<line x1="1007.1" y1="355.5" x2="1011.6" y2="355.5" stroke="#ddd" stroke-width="1.4"/>
<text x="1005.6" y="361.3" font-size="14.5" text-anchor="end" fill="#d4d4d4" textLength="27.1" lengthAdjust="spacingAndGlyphs" >0,25</text>
<line x1="1320.8" y1="553.3" x2="1320.8" y2="558.3" stroke="#ddd" stroke-width="1.4"/>
<text x="1320.8" y="573.6" font-size="14.5" text-anchor="middle" fill="#d4d4d4" textLength="19.2" lengthAdjust="spacingAndGlyphs" >0,3</text>
<line x1="1007.1" y1="315.8" x2="1011.6" y2="315.8" stroke="#ddd" stroke-width="1.4"/>
<text x="1005.6" y="321.6" font-size="14.5" text-anchor="end" fill="#d4d4d4" textLength="19.2" lengthAdjust="spacingAndGlyphs" >0,3</text>
<line x1="1372.3" y1="553.3" x2="1372.3" y2="558.3" stroke="#ddd" stroke-width="1.4"/>
<text x="1372.3" y="573.6" font-size="14.5" text-anchor="middle" fill="#d4d4d4" textLength="27.1" lengthAdjust="spacingAndGlyphs" >0,35</text>
<line x1="1007.1" y1="276.2" x2="1011.6" y2="276.2" stroke="#ddd" stroke-width="1.4"/>
<text x="1005.6" y="282.0" font-size="14.5" text-anchor="end" fill="#d4d4d4" textLength="27.1" lengthAdjust="spacingAndGlyphs" >0,35</text>
<line x1="1423.8" y1="553.3" x2="1423.8" y2="558.3" stroke="#ddd" stroke-width="1.4"/>
<text x="1423.8" y="573.6" font-size="14.5" text-anchor="middle" fill="#d4d4d4" textLength="19.2" lengthAdjust="spacingAndGlyphs" >0,4</text>
<line x1="1007.1" y1="236.5" x2="1011.6" y2="236.5" stroke="#ddd" stroke-width="1.4"/>
<text x="1005.6" y="242.3" font-size="14.5" text-anchor="end" fill="#d4d4d4" textLength="19.2" lengthAdjust="spacingAndGlyphs" >0,4</text>
<line x1="1475.3" y1="553.3" x2="1475.3" y2="558.3" stroke="#ddd" stroke-width="1.4"/>
<text x="1475.3" y="573.6" font-size="14.5" text-anchor="middle" fill="#d4d4d4" textLength="27.1" lengthAdjust="spacingAndGlyphs" >0,45</text>
<line x1="1007.1" y1="196.8" x2="1011.6" y2="196.8" stroke="#ddd" stroke-width="1.4"/>
<text x="1005.6" y="202.7" font-size="14.5" text-anchor="end" fill="#d4d4d4" textLength="27.1" lengthAdjust="spacingAndGlyphs" >0,45</text>
<line x1="1526.8" y1="553.3" x2="1526.8" y2="558.3" stroke="#ddd" stroke-width="1.4"/>
<text x="1526.8" y="573.6" font-size="14.5" text-anchor="middle" fill="#d4d4d4" textLength="19.2" lengthAdjust="spacingAndGlyphs" >0,5</text>
<line x1="1007.1" y1="157.2" x2="1011.6" y2="157.2" stroke="#ddd" stroke-width="1.4"/>
<text x="1005.6" y="163.0" font-size="14.5" text-anchor="end" fill="#d4d4d4" textLength="19.2" lengthAdjust="spacingAndGlyphs" >0,5</text>
<line x1="1578.3" y1="553.3" x2="1578.3" y2="558.3" stroke="#ddd" stroke-width="1.4"/>
<text x="1578.3" y="573.6" font-size="14.5" text-anchor="middle" fill="#d4d4d4" textLength="27.1" lengthAdjust="spacingAndGlyphs" >0,55</text>
<line x1="1007.1" y1="117.5" x2="1011.6" y2="117.5" stroke="#ddd" stroke-width="1.4"/>
<text x="1005.6" y="123.3" font-size="14.5" text-anchor="end" fill="#d4d4d4" textLength="27.1" lengthAdjust="spacingAndGlyphs" >0,55</text>
<rect x="1188.5" y="153.7" width="12.9" height="12.9" fill="none" stroke="#fff" stroke-opacity=".87" stroke-width="1.5"/><rect x="1171.5" y="136.8" width="12.9" height="12.9" fill="none" stroke="#fff" stroke-opacity=".87" stroke-width="1.5"/><rect x="1157.1" y="122.4" width="12.9" height="12.9" fill="none" stroke="#fff" stroke-opacity=".87" stroke-width="1.5"/><rect x="1145.0" y="110.8" width="12.9" height="12.9" fill="none" stroke="#fff" stroke-opacity=".87" stroke-width="1.5"/><rect x="1133.3" y="99.2" width="12.9" height="12.9" fill="none" stroke="#fff" stroke-opacity=".87" stroke-width="1.5"/><rect x="1211.0" y="156.8" width="12.9" height="12.9" fill="none" stroke="#fff" stroke-opacity=".87" stroke-width="1.5"/><rect x="1212.2" y="143.1" width="12.9" height="12.9" fill="none" stroke="#fff" stroke-opacity=".87" stroke-width="1.5"/><rect x="1213.1" y="132.1" width="12.9" height="12.9" fill="none" stroke="#fff" stroke-opacity=".87" stroke-width="1.5"/><rect x="1213.8" y="119.5" width="12.9" height="12.9" fill="none" stroke="#fff" stroke-opacity=".87" stroke-width="1.5"/><rect x="1215.3" y="106.1" width="12.9" height="12.9" fill="none" stroke="#fff" stroke-opacity=".87" stroke-width="1.5"/><rect x="1196.5" y="177.2" width="12.9" height="12.9" fill="none" stroke="#fff" stroke-opacity=".87" stroke-width="1.5"/><rect x="1184.0" y="178.4" width="12.9" height="12.9" fill="none" stroke="#fff" stroke-opacity=".87" stroke-width="1.5"/><rect x="1171.5" y="181.2" width="12.9" height="12.9" fill="none" stroke="#fff" stroke-opacity=".87" stroke-width="1.5"/><rect x="1160.0" y="182.5" width="12.9" height="12.9" fill="none" stroke="#fff" stroke-opacity=".87" stroke-width="1.5"/><rect x="1147.5" y="185.0" width="12.9" height="12.9" fill="none" stroke="#fff" stroke-opacity=".87" stroke-width="1.5"/><rect x="1205.1" y="203.5" width="12.9" height="12.9" fill="none" stroke="#fff" stroke-opacity=".87" stroke-width="1.5"/><rect x="1202.8" y="238.7" width="12.9" height="12.9" fill="none" stroke="#fff" stroke-opacity=".87" stroke-width="1.5"/><rect x="1198.8" y="282.4" width="12.9" height="12.9" fill="none" stroke="#fff" stroke-opacity=".87" stroke-width="1.5"/><rect x="1194.1" y="336.9" width="12.9" height="12.9" fill="none" stroke="#fff" stroke-opacity=".87" stroke-width="1.5"/><rect x="1185.5" y="420.2" width="12.9" height="12.9" fill="none" stroke="#fff" stroke-opacity=".87" stroke-width="1.5"/><rect x="1225.5" y="190.0" width="12.9" height="12.9" fill="none" stroke="#fff" stroke-opacity=".87" stroke-width="1.5"/><rect x="1243.8" y="208.6" width="12.9" height="12.9" fill="none" stroke="#fff" stroke-opacity=".87" stroke-width="1.5"/><rect x="1262.2" y="228.6" width="12.9" height="12.9" fill="none" stroke="#fff" stroke-opacity=".87" stroke-width="1.5"/><rect x="1287.2" y="253.2" width="12.9" height="12.9" fill="none" stroke="#fff" stroke-opacity=".87" stroke-width="1.5"/><rect x="1318.6" y="283.2" width="12.9" height="12.9" fill="none" stroke="#fff" stroke-opacity=".87" stroke-width="1.5"/><rect x="1255.0" y="166.4" width="12.9" height="12.9" fill="none" stroke="#fff" stroke-opacity=".87" stroke-width="1.5"/><rect x="1306.3" y="157.1" width="12.9" height="12.9" fill="none" stroke="#fff" stroke-opacity=".87" stroke-width="1.5"/><rect x="1354.2" y="150.4" width="12.9" height="12.9" fill="none" stroke="#fff" stroke-opacity=".87" stroke-width="1.5"/><rect x="1407.1" y="141.8" width="12.9" height="12.9" fill="none" stroke="#fff" stroke-opacity=".87" stroke-width="1.5"/><rect x="1468.5" y="130.7" width="12.9" height="12.9" fill="none" stroke="#fff" stroke-opacity=".87" stroke-width="1.5"/><rect x="1208.5" y="174.3" width="12.9" height="12.9" fill="none" stroke="#000" stroke-width="1.8"/><circle cx="1180.5" cy="160.7" r="4.3" fill="#90b490" stroke="#000" stroke-width="1.1"/><circle cx="1154.5" cy="138.5" r="4.3" fill="#76b576" stroke="#000" stroke-width="1.1"/><circle cx="1134.5" cy="121.6" r="4.3" fill="#59b659" stroke="#000" stroke-width="1.1"/><circle cx="1118.6" cy="107.6" r="4.3" fill="#37b737" stroke="#000" stroke-width="1.1"/><circle cx="1104.5" cy="94.1" r="4.3" fill="#00b800" stroke="#000" stroke-width="1.1"/><circle cx="1212.7" cy="165.1" r="4.3" fill="#b4b490" stroke="#000" stroke-width="1.1"/><circle cx="1213.7" cy="146.7" r="4.3" fill="#b5b576" stroke="#000" stroke-width="1.1"/><circle cx="1214.6" cy="130.7" r="4.3" fill="#b6b659" stroke="#000" stroke-width="1.1"/><circle cx="1216.5" cy="117.3" r="4.3" fill="#b7b737" stroke="#000" stroke-width="1.1"/><circle cx="1218.7" cy="104.7" r="4.3" fill="#b8b800" stroke="#000" stroke-width="1.1"/><circle cx="1192.4" cy="188.3" r="4.3" fill="#90b4b4" stroke="#000" stroke-width="1.1"/><circle cx="1175.5" cy="191.7" r="4.3" fill="#76b5b5" stroke="#000" stroke-width="1.1"/><circle cx="1158.3" cy="193.9" r="4.3" fill="#59b6b6" stroke="#000" stroke-width="1.1"/><circle cx="1142.3" cy="196.4" r="4.3" fill="#37b7b7" stroke="#000" stroke-width="1.1"/><circle cx="1129.5" cy="199.5" r="4.3" fill="#00b8b8" stroke="#000" stroke-width="1.1"/><circle cx="1208.3" cy="223.0" r="4.3" fill="#9090b4" stroke="#000" stroke-width="1.1"/><circle cx="1204.3" cy="265.4" r="4.3" fill="#7676b5" stroke="#000" stroke-width="1.1"/><circle cx="1200.4" cy="316.6" r="4.3" fill="#5959b6" stroke="#000" stroke-width="1.1"/><circle cx="1194.8" cy="373.1" r="4.3" fill="#3737b7" stroke="#000" stroke-width="1.1"/><circle cx="1188.6" cy="444.4" r="4.3" fill="#0000b8" stroke="#000" stroke-width="1.1"/><circle cx="1234.2" cy="205.4" r="4.3" fill="#b490b4" stroke="#000" stroke-width="1.1"/><circle cx="1260.7" cy="227.1" r="4.3" fill="#b576b5" stroke="#000" stroke-width="1.1"/><circle cx="1285.8" cy="246.5" r="4.3" fill="#b659b6" stroke="#000" stroke-width="1.1"/><circle cx="1318.3" cy="271.7" r="4.3" fill="#b737b7" stroke="#000" stroke-width="1.1"/><circle cx="1374.3" cy="275.4" r="4.3" fill="#b800b8" stroke="#000" stroke-width="1.1"/><circle cx="1278.0" cy="175.3" r="4.3" fill="#b49090" stroke="#000" stroke-width="1.1"/><circle cx="1349.0" cy="164.8" r="4.3" fill="#b57676" stroke="#000" stroke-width="1.1"/><circle cx="1406.8" cy="154.3" r="4.3" fill="#b65959" stroke="#000" stroke-width="1.1"/><circle cx="1468.9" cy="145.7" r="4.3" fill="#b73737" stroke="#000" stroke-width="1.1"/><circle cx="1525.4" cy="135.9" r="4.3" fill="#b80000" stroke="#000" stroke-width="1.1"/><circle cx="1210.2" cy="186.7" r="4.3" fill="#fff" stroke="#000" stroke-width="1.1"/>
<rect x="1419.4" y="406.1" width="205.3" height="138.5" fill="none" stroke="#b4b4b4" stroke-width="1.6"/>
<clipPath id="insc"><rect x="1419.4" y="406.1" width="205.3" height="138.5"/></clipPath>
<g clip-path="url(#insc)"><rect x="1515.3" y="468.8" width="12.4" height="12.4" fill="none" stroke="#fff" stroke-opacity=".95" stroke-width="1.7"/><rect x="1455.8" y="533.8" width="12.4" height="12.4" fill="none" stroke="#fff" stroke-opacity=".95" stroke-width="1.7"/><circle cx="1554.6" cy="414.6" r="3.9" fill="#c8c400" stroke="#000" stroke-width="1.1"/><circle cx="1480.4" cy="493.7" r="3.9" fill="#b8b848" stroke="#000" stroke-width="1.1"/></g>
<rect x="368.6" y="624.8" width="245.5" height="173.9" fill="#262626"/>
<line x1="368.6" y1="658.3" x2="614.1" y2="658.3" stroke="#8c8c8c" stroke-width="1.3"/>
<line x1="364.1" y1="658.3" x2="368.6" y2="658.3" stroke="#ddd" stroke-width="1.4"/>
<text x="363.2" y="663.8" font-size="14.5" text-anchor="end" fill="#d4d4d4" textLength="16.0" lengthAdjust="spacingAndGlyphs" >50</text>
<line x1="368.6" y1="712.0" x2="614.1" y2="712.0" stroke="#8c8c8c" stroke-width="1.3"/>
<line x1="364.1" y1="712.0" x2="368.6" y2="712.0" stroke="#ddd" stroke-width="1.4"/>
<text x="363.2" y="717.5" font-size="14.5" text-anchor="end" fill="#d4d4d4" textLength="8.0" lengthAdjust="spacingAndGlyphs" >0</text>
<line x1="368.6" y1="767.7" x2="614.1" y2="767.7" stroke="#8c8c8c" stroke-width="1.3"/>
<line x1="364.1" y1="767.7" x2="368.6" y2="767.7" stroke="#ddd" stroke-width="1.4"/>
<text x="363.2" y="773.2" font-size="14.5" text-anchor="end" fill="#d4d4d4" textLength="21.9" lengthAdjust="spacingAndGlyphs" >-50</text>
<rect x="393.8" y="712" width="64.7" height="11.3" fill="url(#g35)" stroke="#000" stroke-width="1"/>
<rect x="459.3" y="712" width="65.1" height="4" fill="url(#g36)" stroke="#000" stroke-width=".8"/>
<rect x="525.2" y="712" width="65.4" height="85.1" fill="url(#g37)" stroke="#000" stroke-width="1"/>
<rect x="368.6" y="624.8" width="245.5" height="173.9" fill="none" stroke="#a8a8a8" stroke-width="1.5"/>
<line x1="368.6" y1="798.7" x2="368.6" y2="803.2" stroke="#ddd" stroke-width="1.4"/>
<line x1="614.1" y1="798.7" x2="614.1" y2="803.2" stroke="#ddd" stroke-width="1.4"/>
<text x="478.4" y="620.4" font-size="14.8" text-anchor="middle" fill="#d4d4d4" textLength="80.3" lengthAdjust="spacingAndGlyphs" >RGB Balance</text>
<text x="491.4" y="815.1" font-size="14.5" text-anchor="middle" fill="#d4d4d4" textLength="36.0" lengthAdjust="spacingAndGlyphs" >100%</text>
<path d="M22.5,838.6h11.8l-5.9,-6.4z" fill="#2a2a2a"/>
<path d="M1289.6,838.4h11.6l-5.8,-6.2z" fill="#2c2c2c"/>
<rect x="1350.2" y="838.6" width="10" height="10" fill="#2c2c2c"/>
<path d="M1408.6,836.8v13.2l10.6,-6.6z" fill="#2c2c2c"/>
<text x="1469.1" y="847.0" font-size="12.5" text-anchor="middle" fill="#2c2c2c" font-weight="bold" textLength="17.5" lengthAdjust="spacingAndGlyphs" stroke="#2c2c2c" stroke-width=".4">[··]</text>
<text x="1525.1" y="849.3" font-size="19.0" text-anchor="middle" fill="#2c2c2c" font-weight="bold" textLength="17.5" lengthAdjust="spacingAndGlyphs" stroke="#2c2c2c" stroke-width=".5">∞</text>
<g transform="translate(5.6,0.4)"><g fill="none" stroke="#2c2c2c" stroke-width="3"><path d="M1569.3,842.5a6.2,6.2 0 0 1 10.8,-3.2"/><path d="M1581.7,843.5a6.2,6.2 0 0 1 -10.8,3.2"/></g><path d="M1583,835.2v6.4h-6.4z M1568,850.8v-6.4h6.4z" fill="#2c2c2c"/></g>
<g transform="translate(1614.0,13.6)" fill="#d2d2d2"><circle r="5.1" fill="none" stroke="#d2d2d2" stroke-width="2.4"/><rect x="-1.7" y="-8.2" width="3.4" height="3.4" transform="rotate(0)"/><rect x="-1.7" y="-8.2" width="3.4" height="3.4" transform="rotate(45)"/><rect x="-1.7" y="-8.2" width="3.4" height="3.4" transform="rotate(90)"/><rect x="-1.7" y="-8.2" width="3.4" height="3.4" transform="rotate(135)"/><rect x="-1.7" y="-8.2" width="3.4" height="3.4" transform="rotate(180)"/><rect x="-1.7" y="-8.2" width="3.4" height="3.4" transform="rotate(225)"/><rect x="-1.7" y="-8.2" width="3.4" height="3.4" transform="rotate(270)"/><rect x="-1.7" y="-8.2" width="3.4" height="3.4" transform="rotate(315)"/></g>
</svg>
</body></html>
